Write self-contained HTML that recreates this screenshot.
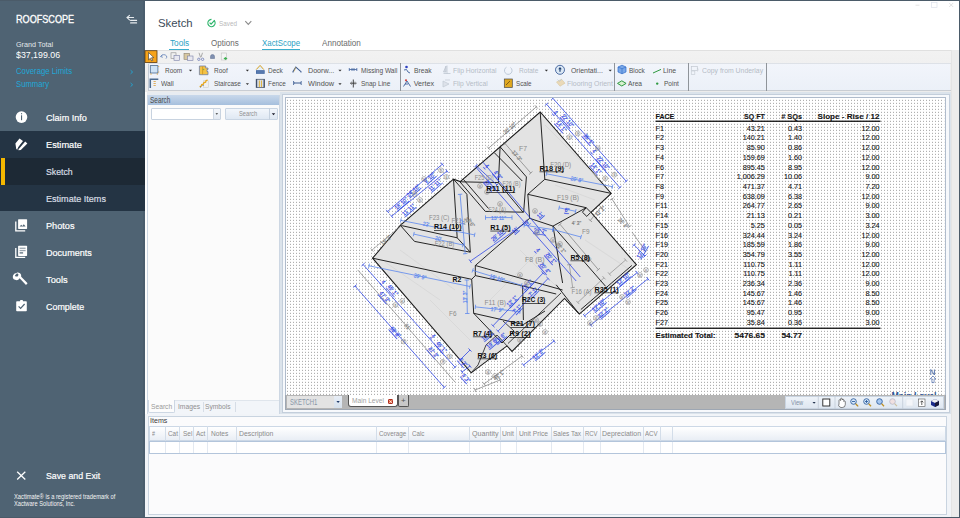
<!DOCTYPE html>
<html><head><meta charset="utf-8">
<style>
*{box-sizing:border-box;margin:0;padding:0}
html,body{width:960px;height:518px;overflow:hidden;background:#3a4855;font-family:"Liberation Sans",sans-serif;position:relative}
.a{position:absolute}
.t{position:absolute;white-space:nowrap;line-height:1;transform-origin:0 0}
svg{position:absolute;left:0;top:0}
</style></head><body>
<div class="a" style="left:0px;top:0px;width:960px;height:518px;background:#3a4855"></div>
<div class="a" style="left:0px;top:0px;width:145px;height:518px;background:#4f6373"></div>
<div class="a" style="left:143px;top:0px;width:1.8px;height:518px;background:#4a5d6d"></div>
<div class="t" style="left:16.00px;top:15.18px;font-size:10.3px;color:#ffffff;transform:scaleX(0.884);-webkit-text-stroke:0.3px #fff;">ROOFSCOPE</div>
<div class="t" style="left:16.00px;top:40.93px;font-size:8px;color:#e2e7eb;transform:scaleX(0.898);">Grand Total</div>
<div class="t" style="left:16.00px;top:51.33px;font-size:9.3px;color:#ffffff;transform:scaleX(0.946);">$37,199.06</div>
<div class="t" style="left:16.00px;top:67.12px;font-size:8.6px;color:#1fa8d8;transform:scaleX(0.902);">Coverage Limits</div>
<div class="t" style="left:16.00px;top:79.92px;font-size:8.6px;color:#1fa8d8;transform:scaleX(0.897);">Summary</div>
<div class="a" style="left:0px;top:130.5px;width:145px;height:27px;background:#243444"></div>
<div class="a" style="left:0px;top:157.5px;width:145px;height:27px;background:#1d2935"></div>
<div class="a" style="left:0px;top:184.5px;width:145px;height:26.5px;background:#243444"></div>
<div class="a" style="left:1px;top:157.5px;width:4px;height:27.5px;background:#f5b700"></div>
<div class="t" style="left:46.30px;top:112.69px;font-size:9.7px;color:#ffffff;transform:scaleX(0.937);-webkit-text-stroke:0.2px #ffffff;">Claim Info</div>
<div class="t" style="left:46.30px;top:139.79px;font-size:9.7px;color:#ffffff;transform:scaleX(0.954);-webkit-text-stroke:0.2px #ffffff;">Estimate</div>
<div class="t" style="left:46.30px;top:166.79px;font-size:9.7px;color:#d8dee4;transform:scaleX(0.900);-webkit-text-stroke:0.2px #d8dee4;">Sketch</div>
<div class="t" style="left:46.30px;top:193.79px;font-size:9.7px;color:#d8dee4;transform:scaleX(0.936);-webkit-text-stroke:0.2px #d8dee4;">Estimate Items</div>
<div class="t" style="left:46.30px;top:220.69px;font-size:9.7px;color:#ffffff;transform:scaleX(0.945);-webkit-text-stroke:0.2px #ffffff;">Photos</div>
<div class="t" style="left:46.30px;top:247.69px;font-size:9.7px;color:#ffffff;transform:scaleX(0.935);-webkit-text-stroke:0.2px #ffffff;">Documents</div>
<div class="t" style="left:46.30px;top:274.79px;font-size:9.7px;color:#ffffff;transform:scaleX(0.956);-webkit-text-stroke:0.2px #ffffff;">Tools</div>
<div class="t" style="left:46.30px;top:301.79px;font-size:9.7px;color:#ffffff;transform:scaleX(0.920);-webkit-text-stroke:0.2px #ffffff;">Complete</div>
<div class="t" style="left:46.25px;top:471.09px;font-size:9.7px;color:#ffffff;transform:scaleX(0.906);-webkit-text-stroke:0.2px #fff;">Save and Exit</div>
<div class="t" style="left:14.00px;top:493.66px;font-size:6.9px;color:#f4f4f4;transform:scaleX(0.834);">Xactimate® is a registered trademark of</div>
<div class="t" style="left:14.00px;top:501.36px;font-size:6.9px;color:#f4f4f4;transform:scaleX(0.824);">Xactware Solutions, Inc.</div>
<div class="a" style="left:145px;top:1px;width:814px;height:49px;background:#fff"></div>
<div class="t" style="left:158.30px;top:16.98px;font-size:11.6px;color:#3c4b59;transform:scaleX(0.978);">Sketch</div>
<div class="t" style="left:218.70px;top:20.23px;font-size:8px;color:#b9b9b9;transform:scaleX(0.792);">Saved</div>
<div class="t" style="left:169.50px;top:38.61px;font-size:9.2px;color:#2a9fc4;transform:scaleX(0.896);">Tools</div>
<div class="a" style="left:169px;top:48.6px;width:20px;height:1.5px;background:#3aaecd"></div>
<div class="t" style="left:211.00px;top:38.61px;font-size:9.2px;color:#6b6b6b;transform:scaleX(0.873);">Options</div>
<div class="t" style="left:261.50px;top:38.61px;font-size:9.2px;color:#2a9fc4;transform:scaleX(0.858);">XactScope</div>
<div class="a" style="left:261.5px;top:48.6px;width:38.5px;height:1.5px;background:#3aaecd"></div>
<div class="t" style="left:322.40px;top:38.61px;font-size:9.2px;color:#6b6b6b;transform:scaleX(0.885);">Annotation</div>
<div class="a" style="left:145px;top:50px;width:814px;height:42px;background:linear-gradient(#f2f2f2,#ececec)"></div>
<div class="a" style="left:145px;top:50px;width:814px;height:0.8px;background:#e0e0e0"></div>
<div class="a" style="left:147.5px;top:63px;width:802.5px;height:27.5px;background:linear-gradient(#f2f5fb,#ebf0f8)"></div>
<div class="a" style="left:147.5px;top:90.2px;width:803px;height:1px;background:#c9cdd3"></div>
<div class="a" style="left:147.5px;top:63px;width:0.9px;height:27.5px;background:#c3cbd5"></div>
<div class="a" style="left:147.5px;top:62.6px;width:803px;height:0.8px;background:#dde1e7"></div>
<div class="t" style="left:164.80px;top:66.81px;font-size:7.2px;color:#525252;transform:scaleX(0.900);">Room</div>
<div class="t" style="left:213.90px;top:66.81px;font-size:7.2px;color:#525252;transform:scaleX(0.902);">Roof</div>
<div class="t" style="left:267.50px;top:66.81px;font-size:7.2px;color:#525252;transform:scaleX(0.904);">Deck</div>
<div class="t" style="left:307.50px;top:66.81px;font-size:7.2px;color:#525252;transform:scaleX(0.992);">Doorw...</div>
<div class="t" style="left:360.60px;top:66.81px;font-size:7.2px;color:#525252;transform:scaleX(0.908);">Missing Wall</div>
<div class="t" style="left:414.40px;top:66.81px;font-size:7.2px;color:#525252;transform:scaleX(0.933);">Break</div>
<div class="t" style="left:453.30px;top:66.81px;font-size:7.2px;color:#b5bcc6;transform:scaleX(0.948);">Flip Horizontal</div>
<div class="t" style="left:519.20px;top:66.81px;font-size:7.2px;color:#b5bcc6;transform:scaleX(0.913);">Rotate</div>
<div class="t" style="left:570.50px;top:66.81px;font-size:7.2px;color:#525252;transform:scaleX(0.961);">Orientati...</div>
<div class="t" style="left:629.00px;top:66.81px;font-size:7.2px;color:#525252;transform:scaleX(0.898);">Block</div>
<div class="t" style="left:663.30px;top:66.81px;font-size:7.2px;color:#525252;transform:scaleX(0.963);">Line</div>
<div class="t" style="left:702.30px;top:66.81px;font-size:7.2px;color:#b5bcc6;transform:scaleX(0.956);">Copy from Underlay</div>
<div class="t" style="left:161.20px;top:80.11px;font-size:7.2px;color:#525252;transform:scaleX(0.931);">Wall</div>
<div class="t" style="left:213.90px;top:80.11px;font-size:7.2px;color:#525252;transform:scaleX(0.896);">Staircase</div>
<div class="t" style="left:267.50px;top:80.11px;font-size:7.2px;color:#525252;transform:scaleX(0.884);">Fence</div>
<div class="t" style="left:307.50px;top:80.11px;font-size:7.2px;color:#525252;transform:scaleX(1.022);">Window</div>
<div class="t" style="left:360.60px;top:80.11px;font-size:7.2px;color:#525252;transform:scaleX(0.907);">Snap Line</div>
<div class="t" style="left:413.70px;top:80.11px;font-size:7.2px;color:#525252;">Vertex</div>
<div class="t" style="left:453.30px;top:80.11px;font-size:7.2px;color:#b5bcc6;transform:scaleX(0.932);">Flip Vertical</div>
<div class="t" style="left:515.60px;top:80.11px;font-size:7.2px;color:#525252;transform:scaleX(0.867);">Scale</div>
<div class="t" style="left:566.60px;top:80.11px;font-size:7.2px;color:#b5bcc6;transform:scaleX(0.965);">Flooring Orient</div>
<div class="t" style="left:627.90px;top:80.11px;font-size:7.2px;color:#525252;transform:scaleX(0.924);">Area</div>
<div class="t" style="left:664.30px;top:80.11px;font-size:7.2px;color:#525252;transform:scaleX(0.908);">Point</div>
<div class="a" style="left:400.3px;top:63px;width:0.9px;height:27.5px;background:#8f949a"></div>
<div class="a" style="left:614.4px;top:63px;width:0.9px;height:27.5px;background:#8f949a"></div>
<div class="a" style="left:688.3px;top:63px;width:0.9px;height:27.5px;background:#8f949a"></div>
<div class="a" style="left:766.3px;top:63px;width:0.9px;height:27.5px;background:#8f949a"></div>
<div class="a" style="left:145px;top:91.5px;width:814px;height:426px;background:#e8ecf1"></div>
<div class="a" style="left:145px;top:91.5px;width:2.4px;height:426px;background:#fdfdfd"></div>
<div class="a" style="left:147.4px;top:94.5px;width:132.3px;height:319px;background:#fbfbfb;border:1px solid #cdd7e3"></div>
<div class="a" style="left:147.9px;top:95px;width:131.3px;height:10px;background:linear-gradient(#c9d8eb,#a6bfdd)"></div>
<div class="t" style="left:150.00px;top:95.89px;font-size:8.4px;color:#4b4b4b;transform:scaleX(0.770);">Search</div>
<div class="a" style="left:280px;top:91.5px;width:670.5px;height:324px;background:#dbe3eb"></div>
<div class="a" style="left:282.3px;top:94.2px;width:668.2px;height:319.2px;background:#f7f9fc;border:1px solid #c3cedb"></div>
<div class="a" style="left:285px;top:97px;width:660.5px;height:298.5px;background:#fff;border:1px solid #afbbcb"></div>
<svg width="960" height="518" viewBox="0 0 960 518" font-family="Liberation Sans, sans-serif"><defs><pattern id="dots" patternUnits="userSpaceOnUse" x="0" y="0" width="3" height="3"><rect x="2" y="1" width="1" height="1" fill="#b0b0b0"/><rect x="2" y="0" width="1" height="1" fill="#f0f0f0"/></pattern><clipPath id="cv"><rect x="286" y="98" width="658.5" height="297"/></clipPath></defs><g clip-path="url(#cv)"><rect x="286" y="98" width="658.5" height="297" fill="url(#dots)"/><polygon points="372.6,258.2 400.3,225.3 453.5,179.2 460.2,181.6 540.2,112 611.2,193.4 591,212.4 636.4,264.7 579.3,314.1 564.5,298.5 512,351.4 507,345.9 471.2,372.8" fill="#e3e3e3" stroke="#1a1a1a" stroke-width="1.05" stroke-linejoin="miter"/>
<path d="M586.2 207.7 L582.4 212.2 L586.8 216.4 L590.8 212.3 Z" fill="#e3e3e3" stroke="#1a1a1a" stroke-width="0.95" stroke-linejoin="round"/>
<line x1="400" y1="250" x2="455" y2="290" stroke="#d2d2d2" stroke-width="0.6"/>
<line x1="430" y1="300" x2="470" y2="340" stroke="#d2d2d2" stroke-width="0.6"/>
<line x1="545" y1="125" x2="600" y2="180" stroke="#d2d2d2" stroke-width="0.6"/>
<line x1="490" y1="300" x2="540" y2="250" stroke="#d2d2d2" stroke-width="0.6"/>
<line x1="520" y1="250" x2="560" y2="290" stroke="#d2d2d2" stroke-width="0.6"/>
<line x1="385" y1="262" x2="440" y2="300" stroke="#d2d2d2" stroke-width="0.6"/>
<line x1="585" y1="240" x2="630" y2="270" stroke="#d2d2d2" stroke-width="0.6"/>
<line x1="555" y1="185" x2="595" y2="200" stroke="#d2d2d2" stroke-width="0.6"/>
<line x1="540.2" y1="112" x2="544.8" y2="179.3" stroke="#1a1a1a" stroke-width="0.95"/>
<line x1="544.8" y1="179.3" x2="611.2" y2="193.4" stroke="#1a1a1a" stroke-width="0.95"/>
<line x1="526.4" y1="176.9" x2="523.6" y2="212.6" stroke="#1a1a1a" stroke-width="0.95"/>
<line x1="544.8" y1="179.3" x2="527.8" y2="194.3" stroke="#1a1a1a" stroke-width="0.95"/>
<line x1="527.8" y1="194.3" x2="529.6" y2="218.3" stroke="#1a1a1a" stroke-width="0.95"/>
<line x1="500.1" y1="146.8" x2="526.4" y2="176.9" stroke="#1a1a1a" stroke-width="0.95"/>
<line x1="500.1" y1="146.8" x2="498.4" y2="182.6" stroke="#1a1a1a" stroke-width="0.95"/>
<line x1="459.9" y1="181.8" x2="498.4" y2="182.6" stroke="#1a1a1a" stroke-width="0.95"/>
<line x1="494.3" y1="152.7" x2="522.3" y2="181" stroke="#1a1a1a" stroke-width="0.95"/>
<line x1="459.9" y1="181.8" x2="485.3" y2="211.4" stroke="#1a1a1a" stroke-width="0.95"/>
<line x1="485.3" y1="211.4" x2="523" y2="212.2" stroke="#1a1a1a" stroke-width="0.95"/>
<line x1="498.4" y1="182.6" x2="523" y2="212.2" stroke="#1a1a1a" stroke-width="0.95"/>
<line x1="463.5" y1="179.5" x2="488.5" y2="208.5" stroke="#1a1a1a" stroke-width="0.95"/>
<line x1="527.8" y1="194.3" x2="586.2" y2="207.7" stroke="#1a1a1a" stroke-width="0.95"/>
<line x1="529.6" y1="218.3" x2="553" y2="226.1" stroke="#1a1a1a" stroke-width="0.95"/>
<line x1="553" y1="226.1" x2="586.2" y2="207.7" stroke="#1a1a1a" stroke-width="0.95"/>
<line x1="553" y1="226.1" x2="605.6" y2="286.3" stroke="#1a1a1a" stroke-width="0.95"/>
<line x1="553" y1="226.1" x2="562.6" y2="283" stroke="#1a1a1a" stroke-width="0.95"/>
<line x1="631.8" y1="265.5" x2="580.9" y2="309.5" stroke="#1a1a1a" stroke-width="0.95"/>
<line x1="556.2" y1="284.8" x2="579.3" y2="314.1" stroke="#1a1a1a" stroke-width="0.95"/>
<line x1="453.5" y1="179.2" x2="457.2" y2="237.8" stroke="#1a1a1a" stroke-width="0.95"/>
<line x1="453.5" y1="179.2" x2="466.9" y2="194.3" stroke="#1a1a1a" stroke-width="0.95"/>
<line x1="466.9" y1="194.3" x2="470.3" y2="252.2" stroke="#1a1a1a" stroke-width="0.95"/>
<line x1="400.3" y1="225.3" x2="414.5" y2="241.4" stroke="#1a1a1a" stroke-width="0.95"/>
<line x1="414.5" y1="241.4" x2="470.3" y2="252.2" stroke="#1a1a1a" stroke-width="0.95"/>
<line x1="400.3" y1="225.3" x2="457.2" y2="237.8" stroke="#1a1a1a" stroke-width="0.95"/>
<line x1="457.2" y1="237.8" x2="470.3" y2="252.2" stroke="#1a1a1a" stroke-width="0.95"/>
<line x1="372.6" y1="258.2" x2="471.7" y2="279.3" stroke="#1a1a1a" stroke-width="0.95"/>
<line x1="529.6" y1="218.3" x2="475.3" y2="265.5" stroke="#1a1a1a" stroke-width="0.95"/>
<line x1="475.3" y1="265.5" x2="475.3" y2="275.6" stroke="#1a1a1a" stroke-width="0.95"/>
<line x1="471.7" y1="279.3" x2="475.3" y2="275.6" stroke="#1a1a1a" stroke-width="0.95"/>
<line x1="475.3" y1="265.5" x2="562.6" y2="290" stroke="#1a1a1a" stroke-width="0.95"/>
<line x1="475.3" y1="275.6" x2="522.3" y2="285.8" stroke="#1a1a1a" stroke-width="0.95"/>
<line x1="522.3" y1="285.8" x2="556.2" y2="294" stroke="#1a1a1a" stroke-width="0.95"/>
<line x1="471.7" y1="279.3" x2="473.7" y2="313.3" stroke="#1a1a1a" stroke-width="0.95"/>
<line x1="473.7" y1="313.3" x2="502" y2="343" stroke="#1a1a1a" stroke-width="0.95"/>
<line x1="502" y1="343" x2="514" y2="331" stroke="#1a1a1a" stroke-width="0.95"/>
<line x1="473.7" y1="313.3" x2="523.4" y2="324.5" stroke="#1a1a1a" stroke-width="0.95"/>
<line x1="522.6" y1="286" x2="523.4" y2="320" stroke="#1a1a1a" stroke-width="0.95"/>
<line x1="523.4" y1="324.5" x2="545" y2="311" stroke="#1a1a1a" stroke-width="0.95"/>
<line x1="561" y1="293" x2="508" y2="343.5" stroke="#1a1a1a" stroke-width="0.8"/>
<line x1="507" y1="345.9" x2="497" y2="335" stroke="#1a1a1a" stroke-width="0.8"/>
<line x1="497" y1="335" x2="486" y2="345" stroke="#1a1a1a" stroke-width="0.8"/>
<line x1="514" y1="331" x2="503" y2="321" stroke="#1a1a1a" stroke-width="0.8"/>
<line x1="486" y1="345" x2="478" y2="365" stroke="#1a1a1a" stroke-width="0.8"/>
<line x1="471.2" y1="372.8" x2="478" y2="365" stroke="#1a1a1a" stroke-width="0.8"/>
<line x1="552.9" y1="98.3" x2="626.2" y2="181.2" stroke="#2f46e6" stroke-width="0.8"/>
<line x1="554.55" y1="96.84" x2="551.25" y2="99.76" stroke="#2f46e6" stroke-width="0.8"/>
<line x1="627.85" y1="179.74" x2="624.55" y2="182.66" stroke="#2f46e6" stroke-width="0.8"/>
<line x1="546.5" y1="104.2" x2="619.8" y2="187.6" stroke="#2f46e6" stroke-width="0.8"/>
<line x1="548.15" y1="102.75" x2="544.85" y2="105.65" stroke="#2f46e6" stroke-width="0.8"/>
<line x1="621.45" y1="186.15" x2="618.15" y2="189.05" stroke="#2f46e6" stroke-width="0.8"/>
<line x1="387.6" y1="211.5" x2="442.3" y2="164.2" stroke="#2f46e6" stroke-width="0.8"/>
<line x1="386.16" y1="209.84" x2="389.04" y2="213.16" stroke="#2f46e6" stroke-width="0.8"/>
<line x1="440.86" y1="162.54" x2="443.74" y2="165.86" stroke="#2f46e6" stroke-width="0.8"/>
<line x1="391.6" y1="216.2" x2="447" y2="171" stroke="#2f46e6" stroke-width="0.8"/>
<line x1="390.21" y1="214.5" x2="392.99" y2="217.9" stroke="#2f46e6" stroke-width="0.8"/>
<line x1="445.61" y1="169.3" x2="448.39" y2="172.7" stroke="#2f46e6" stroke-width="0.8"/>
<line x1="363.1" y1="264.5" x2="455" y2="367.2" stroke="#2f46e6" stroke-width="0.8"/>
<line x1="364.74" y1="263.03" x2="361.46" y2="265.97" stroke="#2f46e6" stroke-width="0.8"/>
<line x1="456.64" y1="365.73" x2="453.36" y2="368.67" stroke="#2f46e6" stroke-width="0.8"/>
<line x1="355" y1="286" x2="444.2" y2="387.4" stroke="#2f46e6" stroke-width="0.8"/>
<line x1="356.65" y1="284.55" x2="353.35" y2="287.45" stroke="#2f46e6" stroke-width="0.8"/>
<line x1="445.85" y1="385.95" x2="442.55" y2="388.85" stroke="#2f46e6" stroke-width="0.8"/>
<line x1="357.7" y1="269.9" x2="455" y2="382" stroke="#7c7c7c" stroke-width="0.7"/>
<line x1="470.3" y1="261.2" x2="524" y2="224" stroke="#2f46e6" stroke-width="0.8"/>
<line x1="469.05" y1="259.39" x2="471.55" y2="263.01" stroke="#2f46e6" stroke-width="0.8"/>
<line x1="522.75" y1="222.19" x2="525.25" y2="225.81" stroke="#2f46e6" stroke-width="0.8"/>
<line x1="476" y1="165.6" x2="497" y2="185" stroke="#2f46e6" stroke-width="0.8"/>
<line x1="477.49" y1="163.98" x2="474.51" y2="167.22" stroke="#2f46e6" stroke-width="0.8"/>
<line x1="498.49" y1="183.38" x2="495.51" y2="186.62" stroke="#2f46e6" stroke-width="0.8"/>
<line x1="476.2" y1="167.6" x2="576.2" y2="281" stroke="#2f46e6" stroke-width="0.8"/>
<line x1="483" y1="162.2" x2="580.3" y2="277" stroke="#2f46e6" stroke-width="0.8"/>
<line x1="553" y1="229.5" x2="581" y2="237" stroke="#5b86ee" stroke-width="0.8"/>
<line x1="553.57" y1="227.37" x2="552.43" y2="231.63" stroke="#5b86ee" stroke-width="0.8"/>
<line x1="581.57" y1="234.87" x2="580.43" y2="239.13" stroke="#5b86ee" stroke-width="0.8"/>
<line x1="569.3" y1="264.6" x2="572.7" y2="287.6" stroke="#7c7c7c" stroke-width="0.6"/>
<line x1="571.48" y1="264.28" x2="567.12" y2="264.92" stroke="#7c7c7c" stroke-width="0.6"/>
<line x1="574.88" y1="287.28" x2="570.52" y2="287.92" stroke="#7c7c7c" stroke-width="0.6"/>
<line x1="485.5" y1="217.6" x2="512" y2="217.6" stroke="#5b86ee" stroke-width="0.8"/>
<line x1="485.5" y1="215.4" x2="485.5" y2="219.8" stroke="#5b86ee" stroke-width="0.8"/>
<line x1="512.0" y1="215.4" x2="512.0" y2="219.8" stroke="#5b86ee" stroke-width="0.8"/>
<line x1="546.5" y1="173.8" x2="612.5" y2="186.7" stroke="#5b86ee" stroke-width="0.8"/>
<line x1="546.92" y1="171.64" x2="546.08" y2="175.96" stroke="#5b86ee" stroke-width="0.8"/>
<line x1="612.92" y1="184.54" x2="612.08" y2="188.86" stroke="#5b86ee" stroke-width="0.8"/>
<line x1="369" y1="265.8" x2="470" y2="286.5" stroke="#5b86ee" stroke-width="0.8"/>
<line x1="369.44" y1="263.64" x2="368.56" y2="267.96" stroke="#5b86ee" stroke-width="0.8"/>
<line x1="470.44" y1="284.34" x2="469.56" y2="288.66" stroke="#5b86ee" stroke-width="0.8"/>
<line x1="472.7" y1="270.4" x2="521.4" y2="285.3" stroke="#5b86ee" stroke-width="0.8"/>
<line x1="473.34" y1="268.3" x2="472.06" y2="272.5" stroke="#5b86ee" stroke-width="0.8"/>
<line x1="522.04" y1="283.2" x2="520.76" y2="287.4" stroke="#5b86ee" stroke-width="0.8"/>
<line x1="400.8" y1="220.4" x2="474.6" y2="234.9" stroke="#5b86ee" stroke-width="0.8"/>
<line x1="401.22" y1="218.24" x2="400.38" y2="222.56" stroke="#5b86ee" stroke-width="0.8"/>
<line x1="475.02" y1="232.74" x2="474.18" y2="237.06" stroke="#5b86ee" stroke-width="0.8"/>
<line x1="413.8" y1="234.1" x2="463" y2="245" stroke="#5b86ee" stroke-width="0.8"/>
<line x1="414.28" y1="231.95" x2="413.32" y2="236.25" stroke="#5b86ee" stroke-width="0.8"/>
<line x1="463.48" y1="242.85" x2="462.52" y2="247.15" stroke="#5b86ee" stroke-width="0.8"/>
<line x1="460.1" y1="194.3" x2="465.2" y2="253.7" stroke="#5b86ee" stroke-width="0.8"/>
<line x1="462.29" y1="194.11" x2="457.91" y2="194.49" stroke="#5b86ee" stroke-width="0.8"/>
<line x1="467.39" y1="253.51" x2="463.01" y2="253.89" stroke="#5b86ee" stroke-width="0.8"/>
<line x1="524.3" y1="225.2" x2="553" y2="229.6" stroke="#5b86ee" stroke-width="0.8"/>
<line x1="524.63" y1="223.03" x2="523.97" y2="227.37" stroke="#5b86ee" stroke-width="0.8"/>
<line x1="553.33" y1="227.43" x2="552.67" y2="231.77" stroke="#5b86ee" stroke-width="0.8"/>
<line x1="559.1" y1="207.8" x2="575.6" y2="211.3" stroke="#5b86ee" stroke-width="0.8"/>
<line x1="559.56" y1="205.65" x2="558.64" y2="209.95" stroke="#5b86ee" stroke-width="0.8"/>
<line x1="576.06" y1="209.15" x2="575.14" y2="213.45" stroke="#5b86ee" stroke-width="0.8"/>
<line x1="475.4" y1="306.9" x2="520" y2="311.6" stroke="#5b86ee" stroke-width="0.8"/>
<line x1="475.63" y1="304.71" x2="475.17" y2="309.09" stroke="#5b86ee" stroke-width="0.8"/>
<line x1="520.23" y1="309.41" x2="519.77" y2="313.79" stroke="#5b86ee" stroke-width="0.8"/>
<line x1="584.6" y1="315.8" x2="637.1" y2="272.6" stroke="#2f46e6" stroke-width="0.8"/>
<line x1="583.2" y1="314.1" x2="586.0" y2="317.5" stroke="#2f46e6" stroke-width="0.8"/>
<line x1="635.7" y1="270.9" x2="638.5" y2="274.3" stroke="#2f46e6" stroke-width="0.8"/>
<line x1="590.8" y1="325" x2="647.9" y2="278.8" stroke="#2f46e6" stroke-width="0.8"/>
<line x1="589.42" y1="323.29" x2="592.18" y2="326.71" stroke="#2f46e6" stroke-width="0.8"/>
<line x1="646.52" y1="277.09" x2="649.28" y2="280.51" stroke="#2f46e6" stroke-width="0.8"/>
<line x1="634" y1="244.8" x2="645" y2="256" stroke="#2f46e6" stroke-width="0.8"/>
<line x1="635.57" y1="243.26" x2="632.43" y2="246.34" stroke="#2f46e6" stroke-width="0.8"/>
<line x1="646.57" y1="254.46" x2="643.43" y2="257.54" stroke="#2f46e6" stroke-width="0.8"/>
<line x1="523.5" y1="365" x2="554" y2="341" stroke="#2f46e6" stroke-width="0.8"/>
<line x1="522.14" y1="363.27" x2="524.86" y2="366.73" stroke="#2f46e6" stroke-width="0.8"/>
<line x1="552.64" y1="339.27" x2="555.36" y2="342.73" stroke="#2f46e6" stroke-width="0.8"/>
<line x1="493" y1="325.8" x2="543" y2="273.1" stroke="#2f46e6" stroke-width="0.8"/>
<line x1="491.4" y1="324.29" x2="494.6" y2="327.31" stroke="#2f46e6" stroke-width="0.8"/>
<line x1="541.4" y1="271.59" x2="544.6" y2="274.61" stroke="#2f46e6" stroke-width="0.8"/>
<line x1="498" y1="331.2" x2="548" y2="278.5" stroke="#2f46e6" stroke-width="0.8"/>
<line x1="496.4" y1="329.69" x2="499.6" y2="332.71" stroke="#2f46e6" stroke-width="0.8"/>
<line x1="546.4" y1="276.99" x2="549.6" y2="280.01" stroke="#2f46e6" stroke-width="0.8"/>
<line x1="466.8" y1="280" x2="467.3" y2="313.5" stroke="#5b86ee" stroke-width="0.8"/>
<line x1="469.0" y1="279.97" x2="464.6" y2="280.03" stroke="#5b86ee" stroke-width="0.8"/>
<line x1="469.5" y1="313.47" x2="465.1" y2="313.53" stroke="#5b86ee" stroke-width="0.8"/>
<line x1="460" y1="360" x2="470" y2="350" stroke="#2f46e6" stroke-width="0.8"/>
<line x1="458.44" y1="358.44" x2="461.56" y2="361.56" stroke="#2f46e6" stroke-width="0.8"/>
<line x1="468.44" y1="348.44" x2="471.56" y2="351.56" stroke="#2f46e6" stroke-width="0.8"/>
<line x1="462" y1="372" x2="470" y2="366" stroke="#2f46e6" stroke-width="0.8"/>
<line x1="460.68" y1="370.24" x2="463.32" y2="373.76" stroke="#2f46e6" stroke-width="0.8"/>
<line x1="468.68" y1="364.24" x2="471.32" y2="367.76" stroke="#2f46e6" stroke-width="0.8"/>
<line x1="609.4" y1="274" x2="625.6" y2="260" stroke="#7c7c7c" stroke-width="0.6"/>
<line x1="607.96" y1="272.34" x2="610.84" y2="275.66" stroke="#7c7c7c" stroke-width="0.6"/>
<line x1="624.16" y1="258.34" x2="627.04" y2="261.66" stroke="#7c7c7c" stroke-width="0.6"/>
<line x1="577.8" y1="302.5" x2="604" y2="277.8" stroke="#7c7c7c" stroke-width="0.6"/>
<line x1="576.29" y1="300.9" x2="579.31" y2="304.1" stroke="#7c7c7c" stroke-width="0.6"/>
<line x1="602.49" y1="276.2" x2="605.51" y2="279.4" stroke="#7c7c7c" stroke-width="0.6"/>
<line x1="488.6" y1="148.2" x2="536.3" y2="106.9" stroke="#7c7c7c" stroke-width="0.7"/>
<line x1="487.16" y1="146.54" x2="490.04" y2="149.86" stroke="#7c7c7c" stroke-width="0.7"/>
<line x1="534.86" y1="105.24" x2="537.74" y2="108.56" stroke="#7c7c7c" stroke-width="0.7"/>
<line x1="505.1" y1="143.6" x2="530.8" y2="173" stroke="#7c7c7c" stroke-width="0.7"/>
<line x1="506.76" y1="142.15" x2="503.44" y2="145.05" stroke="#7c7c7c" stroke-width="0.7"/>
<line x1="532.46" y1="171.55" x2="529.14" y2="174.45" stroke="#7c7c7c" stroke-width="0.7"/>
<line x1="611.9" y1="198.9" x2="629.5" y2="226.6" stroke="#7c7c7c" stroke-width="0.7"/>
<line x1="613.76" y1="197.72" x2="610.04" y2="200.08" stroke="#7c7c7c" stroke-width="0.7"/>
<line x1="631.36" y1="225.42" x2="627.64" y2="227.78" stroke="#7c7c7c" stroke-width="0.7"/>
<line x1="632" y1="232" x2="646" y2="252" stroke="#7c7c7c" stroke-width="0.7"/>
<line x1="484" y1="384" x2="522" y2="356" stroke="#7c7c7c" stroke-width="0.7"/>
<line x1="482.69" y1="382.23" x2="485.31" y2="385.77" stroke="#7c7c7c" stroke-width="0.7"/>
<line x1="520.69" y1="354.23" x2="523.31" y2="357.77" stroke="#7c7c7c" stroke-width="0.7"/>
<line x1="560" y1="224.3" x2="598.3" y2="269.6" stroke="#7c7c7c" stroke-width="0.7"/>
<line x1="561.68" y1="222.88" x2="558.32" y2="225.72" stroke="#7c7c7c" stroke-width="0.7"/>
<line x1="599.98" y1="268.18" x2="596.62" y2="271.02" stroke="#7c7c7c" stroke-width="0.7"/>
<line x1="475" y1="390" x2="500" y2="380" stroke="#7c7c7c" stroke-width="0.7"/>
<line x1="474.18" y1="387.96" x2="475.82" y2="392.04" stroke="#7c7c7c" stroke-width="0.7"/>
<line x1="499.18" y1="377.96" x2="500.82" y2="382.04" stroke="#7c7c7c" stroke-width="0.7"/>
<line x1="590.3" y1="220.5" x2="601" y2="207" stroke="#7c7c7c" stroke-width="0.7"/>
<line x1="588.58" y1="219.13" x2="592.02" y2="221.87" stroke="#7c7c7c" stroke-width="0.7"/>
<line x1="599.28" y1="205.63" x2="602.72" y2="208.37" stroke="#7c7c7c" stroke-width="0.7"/>
<line x1="372" y1="250" x2="402" y2="225" stroke="#7c7c7c" stroke-width="0.6"/>
<line x1="370.59" y1="248.31" x2="373.41" y2="251.69" stroke="#7c7c7c" stroke-width="0.6"/>
<line x1="400.59" y1="223.31" x2="403.41" y2="226.69" stroke="#7c7c7c" stroke-width="0.6"/>
<text x="0" y="0" dy="2.1" font-size="5.9" fill="#2f46e6" stroke="#2f46e6" stroke-width="0.18" text-anchor="middle" text-decoration="underline" transform="translate(401.1 203.4) rotate(-41) scale(0.86 1)">18' 10"</text>
<text x="0" y="0" dy="2.1" font-size="5.9" fill="#2f46e6" stroke="#2f46e6" stroke-width="0.18" text-anchor="middle" text-decoration="underline" transform="translate(413.2 190.5) rotate(-41) scale(0.86 1)">24' 10"</text>
<text x="0" y="0" dy="2.1" font-size="5.9" fill="#2f46e6" stroke="#2f46e6" stroke-width="0.18" text-anchor="middle" text-decoration="underline" transform="translate(429.5 177.7) rotate(-41) scale(0.86 1)">9' 10"</text>
<text x="0" y="0" dy="2.1" font-size="5.9" fill="#2f46e6" stroke="#2f46e6" stroke-width="0.18" text-anchor="middle" text-decoration="underline" transform="translate(408.5 209.5) rotate(-41) scale(0.86 1)">11' 11"</text>
<text x="0" y="0" dy="2.1" font-size="5.9" fill="#2f46e6" stroke="#2f46e6" stroke-width="0.18" text-anchor="middle" text-decoration="underline" transform="translate(434.9 185.1) rotate(-41) scale(0.86 1)">11' 11"</text>
<text x="0" y="0" dy="2.1" font-size="5.9" fill="#2f46e6" stroke="#2f46e6" stroke-width="0.18" text-anchor="middle" text-decoration="underline" transform="translate(555.7 112.4) rotate(48.5) scale(0.86 1)">4</text>
<text x="0" y="0" dy="2.1" font-size="5.9" fill="#2f46e6" stroke="#2f46e6" stroke-width="0.18" text-anchor="middle" text-decoration="underline" transform="translate(567.6 120.7) rotate(48.5) scale(0.86 1)">22' 10"</text>
<text x="0" y="0" dy="2.1" font-size="5.9" fill="#2f46e6" stroke="#2f46e6" stroke-width="0.18" text-anchor="middle" text-decoration="underline" transform="translate(561.2 126.2) rotate(48.5) scale(0.86 1)">14' 1"</text>
<text x="0" y="0" dy="2.1" font-size="5.9" fill="#2f46e6" stroke="#2f46e6" stroke-width="0.18" text-anchor="middle" text-decoration="underline" transform="translate(588.7 139) rotate(48.5) scale(0.86 1)">36' 1"</text>
<text x="0" y="0" dy="2.1" font-size="5.9" fill="#2f46e6" stroke="#2f46e6" stroke-width="0.18" text-anchor="middle" text-decoration="underline" transform="translate(603.3 162.8) rotate(48.5) scale(0.86 1)">22' 10"</text>
<text x="0" y="0" dy="2.1" font-size="5.9" fill="#2f46e6" stroke="#2f46e6" stroke-width="0.18" text-anchor="middle" text-decoration="underline" transform="translate(596 168.3) rotate(48.5) scale(0.86 1)">14' 1"</text>
<text x="0" y="0" dy="2.1" font-size="5.9" fill="#2f46e6" stroke="#2f46e6" stroke-width="0.18" text-anchor="middle" text-decoration="underline" transform="translate(594.2 150.9) rotate(48.5) scale(0.86 1)">4</text>
<text x="0" y="0" dy="2.1" font-size="5.9" fill="#2f46e6" stroke="#2f46e6" stroke-width="0.18" text-anchor="middle" text-decoration="underline" transform="translate(383.4 282) rotate(48.5) scale(0.86 1)">4</text>
<text x="0" y="0" dy="2.1" font-size="5.9" fill="#2f46e6" stroke="#2f46e6" stroke-width="0.18" text-anchor="middle" text-decoration="underline" transform="translate(392.8 290.1) rotate(48.5) scale(0.86 1)">46' 1"</text>
<text x="0" y="0" dy="2.1" font-size="5.9" fill="#2f46e6" stroke="#2f46e6" stroke-width="0.18" text-anchor="middle" text-decoration="underline" transform="translate(384.7 296.9) rotate(48.5) scale(0.86 1)">47' 3"</text>
<text x="0" y="0" dy="2.1" font-size="5.9" fill="#2f46e6" stroke="#2f46e6" stroke-width="0.18" text-anchor="middle" text-decoration="underline" transform="translate(395.5 332) rotate(48.5) scale(0.86 1)">68' 8"</text>
<text x="0" y="0" dy="2.1" font-size="5.9" fill="#2f46e6" stroke="#2f46e6" stroke-width="0.18" text-anchor="middle" text-decoration="underline" transform="translate(433.4 336) rotate(48.5) scale(0.86 1)">4</text>
<text x="0" y="0" dy="2.1" font-size="5.9" fill="#2f46e6" stroke="#2f46e6" stroke-width="0.18" text-anchor="middle" text-decoration="underline" transform="translate(441.5 346.9) rotate(48.5) scale(0.86 1)">46' 1"</text>
<text x="0" y="0" dy="2.1" font-size="5.9" fill="#2f46e6" stroke="#2f46e6" stroke-width="0.18" text-anchor="middle" text-decoration="underline" transform="translate(433.4 352.3) rotate(48.5) scale(0.86 1)">47' 3"</text>
<text x="0" y="0" dy="2.1" font-size="5.9" fill="#2f46e6" stroke="#2f46e6" stroke-width="0.18" text-anchor="middle" text-decoration="underline" transform="translate(497.7 234.9) rotate(-41) scale(0.86 1)">28' 10"</text>
<text x="0" y="0" dy="2.1" font-size="5.9" fill="#2f46e6" stroke="#2f46e6" stroke-width="0.18" text-anchor="middle" text-decoration="underline" transform="translate(515 230) rotate(-41) scale(0.86 1)">11'</text>
<text x="0" y="0" dy="2.1" font-size="5.9" fill="#2f46e6" stroke="#2f46e6" stroke-width="0.18" text-anchor="middle" text-decoration="underline" transform="translate(527 222) rotate(-41) scale(0.86 1)">9'</text>
<text x="0" y="0" dy="2.1" font-size="5.9" fill="#2f46e6" stroke="#2f46e6" stroke-width="0.18" text-anchor="middle" text-decoration="underline" transform="translate(540 215) rotate(-41) scale(0.86 1)">11'</text>
<text x="0" y="0" dy="2.1" font-size="5.9" fill="#2f46e6" stroke="#2f46e6" stroke-width="0.18" text-anchor="middle" text-decoration="underline" transform="translate(551 258) rotate(48.5) scale(0.86 1)">20' 1"</text>
<text x="0" y="0" dy="2.1" font-size="5.9" fill="#2f46e6" stroke="#2f46e6" stroke-width="0.18" text-anchor="middle" text-decoration="underline" transform="translate(545 268) rotate(48.5) scale(0.86 1)">20' 4"</text>
<text x="0" y="0" dy="2.1" font-size="5.9" fill="#2f46e6" stroke="#2f46e6" stroke-width="0.18" text-anchor="middle" text-decoration="underline" transform="translate(538 250) rotate(48.5) scale(0.86 1)">4</text>
<text x="0" y="0" dy="2.1" font-size="5.9" fill="#2f46e6" stroke="#2f46e6" stroke-width="0.18" text-anchor="middle" text-decoration="underline" transform="translate(498 175) rotate(48.5) scale(0.86 1)">4' 9"</text>
<text x="0" y="0" dy="2.1" font-size="5.9" fill="#2f46e6" stroke="#2f46e6" stroke-width="0.18" text-anchor="middle" text-decoration="underline" transform="translate(490 185) rotate(48.5) scale(0.86 1)">25' 4"</text>
<text x="0" y="0" dy="2.1" font-size="5.9" fill="#2f46e6" stroke="#2f46e6" stroke-width="0.18" text-anchor="middle" text-decoration="underline" transform="translate(487 166) rotate(48.5) scale(0.86 1)">4</text>
<text x="0" y="0" dy="2.1" font-size="5.9" fill="#2f46e6" stroke="#2f46e6" stroke-width="0.18" text-anchor="middle" text-decoration="underline" transform="translate(598.5 305) rotate(-41) scale(0.86 1)">12' 10"</text>
<text x="0" y="0" dy="2.1" font-size="5.9" fill="#2f46e6" stroke="#2f46e6" stroke-width="0.18" text-anchor="middle" text-decoration="underline" transform="translate(623.2 278.8) rotate(-41) scale(0.86 1)">12' 10"</text>
<text x="0" y="0" dy="2.1" font-size="5.9" fill="#2f46e6" stroke="#2f46e6" stroke-width="0.18" text-anchor="middle" text-decoration="underline" transform="translate(603.1 312.7) rotate(-41) scale(0.86 1)">32' 2"</text>
<text x="0" y="0" dy="2.1" font-size="5.9" fill="#2f46e6" stroke="#2f46e6" stroke-width="0.18" text-anchor="middle" text-decoration="underline" transform="translate(629.4 291.1) rotate(-41) scale(0.86 1)">32' 2"</text>
<text x="0" y="0" dy="2.1" font-size="5.9" fill="#2f46e6" stroke="#2f46e6" stroke-width="0.18" text-anchor="middle" text-decoration="underline" transform="translate(641.7 251) rotate(-60) scale(0.86 1)">12' 10"</text>
<text x="0" y="0" dy="2.1" font-size="5.9" fill="#2f46e6" stroke="#2f46e6" stroke-width="0.18" text-anchor="middle" text-decoration="underline" transform="translate(538 354) rotate(-41) scale(0.86 1)">12' 2"</text>
<text x="0" y="0" dy="2.1" font-size="5.9" fill="#2f46e6" stroke="#2f46e6" stroke-width="0.18" text-anchor="middle" text-decoration="underline" transform="translate(487 335) rotate(-41) scale(0.86 1)">19' 2"</text>
<text x="0" y="0" dy="2.1" font-size="5.9" fill="#2f46e6" stroke="#2f46e6" stroke-width="0.18" text-anchor="middle" text-decoration="underline" transform="translate(492 343) rotate(-41) scale(0.86 1)">19' 6"</text>
<text x="0" y="0" dy="2.1" font-size="5.9" fill="#2f46e6" stroke="#2f46e6" stroke-width="0.18" text-anchor="middle" text-decoration="underline" transform="translate(500 338) rotate(-41) scale(0.86 1)">23' 6"</text>
<text x="0" y="0" dy="2.1" font-size="5.9" fill="#2f46e6" stroke="#2f46e6" stroke-width="0.18" text-anchor="middle" text-decoration="underline" transform="translate(512 301) rotate(-46) scale(0.86 1)">12' 1"</text>
<text x="0" y="0" dy="2.1" font-size="5.9" fill="#2f46e6" stroke="#2f46e6" stroke-width="0.18" text-anchor="middle" text-decoration="underline" transform="translate(527 285) rotate(-46) scale(0.86 1)">12' 1"</text>
<text x="0" y="0" dy="2.1" font-size="5.9" fill="#2f46e6" stroke="#2f46e6" stroke-width="0.18" text-anchor="middle" text-decoration="underline" transform="translate(517 309) rotate(-46) scale(0.86 1)">7' 1"</text>
<text x="0" y="0" dy="2.1" font-size="5.9" fill="#2f46e6" stroke="#2f46e6" stroke-width="0.18" text-anchor="middle" text-decoration="underline" transform="translate(533 292) rotate(-46) scale(0.86 1)">7' 1"</text>
<text x="0" y="0" dy="2.1" font-size="5.9" fill="#2f46e6" stroke="#2f46e6" stroke-width="0.18" text-anchor="middle" text-decoration="underline" transform="translate(463 362) rotate(48.5) scale(0.86 1)">4' 3"</text>
<text x="0" y="0" dy="2.1" font-size="5.9" fill="#2f46e6" stroke="#2f46e6" stroke-width="0.18" text-anchor="middle" text-decoration="underline" transform="translate(466 378) rotate(48.5) scale(0.86 1)">4' 3"</text>
<text x="0" y="0" dy="2.1" font-size="5.9" fill="#2f46e6" stroke="#2f46e6" stroke-width="0.18" text-anchor="middle" text-decoration="underline" transform="translate(540 231) rotate(8) scale(0.86 1)">23' 7"</text>
<text x="0" y="0" dy="2.1" font-size="5.9" fill="#2f46e6" stroke="#2f46e6" stroke-width="0.18" text-anchor="middle" text-decoration="underline" transform="translate(567 210) rotate(8) scale(0.86 1)">6"</text>
<text x="0" y="0" dy="2.1" font-size="5.8" fill="#5b86ee" stroke="#5b86ee" stroke-width="0.18" text-anchor="middle" transform="translate(426 224) rotate(11) scale(0.86 1)">23'</text>
<text x="0" y="0" dy="2.1" font-size="5.8" fill="#5b86ee" stroke="#5b86ee" stroke-width="0.18" text-anchor="middle" transform="translate(438.4 238.5) rotate(11) scale(0.86 1)">20'</text>
<text x="0" y="0" dy="2.1" font-size="5.8" fill="#5b86ee" stroke="#5b86ee" stroke-width="0.18" text-anchor="middle" transform="translate(498.5 218) rotate(0) scale(0.86 1)">13' 11"</text>
<text x="0" y="0" dy="2.1" font-size="5.8" fill="#5b86ee" stroke="#5b86ee" stroke-width="0.18" text-anchor="middle" transform="translate(576.7 179.3) rotate(11) scale(0.86 1)">20' 8"</text>
<text x="0" y="0" dy="2.1" font-size="5.8" fill="#5b86ee" stroke="#5b86ee" stroke-width="0.18" text-anchor="middle" transform="translate(420 276.5) rotate(12) scale(0.86 1)">39' 9"</text>
<text x="0" y="0" dy="2.1" font-size="5.8" fill="#5b86ee" stroke="#5b86ee" stroke-width="0.18" text-anchor="middle" transform="translate(497 278) rotate(17) scale(0.86 1)">19' 10"</text>
<text x="0" y="0" dy="2.1" font-size="5.8" fill="#5b86ee" stroke="#5b86ee" stroke-width="0.18" text-anchor="middle" transform="translate(497 309.5) rotate(6) scale(0.86 1)">17' 9"</text>
<text x="0" y="0" dy="2.1" font-size="5.8" fill="#5b86ee" stroke="#5b86ee" stroke-width="0.18" text-anchor="middle" transform="translate(464.6 297) rotate(-90) scale(0.86 1)">13' 3"</text>
<text x="0" y="0" dy="2.1" font-size="5.8" fill="#5b86ee" stroke="#5b86ee" stroke-width="0.18" text-anchor="middle" transform="translate(462 222) rotate(-90) scale(0.86 1)">17'</text>
<text x="0" y="0" dy="2.1" font-size="5.6" fill="#7c7c7c" stroke="#7c7c7c" stroke-width="0.18" text-anchor="middle" transform="translate(509.7 128) rotate(-41) scale(0.86 1)">20' 10"</text>
<text x="0" y="0" dy="2.1" font-size="5.6" fill="#7c7c7c" stroke="#7c7c7c" stroke-width="0.18" text-anchor="middle" transform="translate(517 155.6) rotate(48.5) scale(0.86 1)">13' 3"</text>
<text x="0" y="0" dy="2.1" font-size="5.6" fill="#7c7c7c" stroke="#7c7c7c" stroke-width="0.18" text-anchor="middle" transform="translate(407.7 326.6) rotate(48.5) scale(0.86 1)">51'</text>
<text x="0" y="0" dy="2.1" font-size="5.6" fill="#7c7c7c" stroke="#7c7c7c" stroke-width="0.18" text-anchor="middle" transform="translate(576.5 222.6) rotate(0) scale(0.86 1)">4' 3"</text>
<text x="0" y="0" dy="2.1" font-size="5.6" fill="#7c7c7c" stroke="#7c7c7c" stroke-width="0.18" text-anchor="middle" transform="translate(600 210.9) rotate(-41) scale(0.86 1)">11' 1"</text>
<text x="0" y="0" dy="2.1" font-size="5.6" fill="#7c7c7c" stroke="#7c7c7c" stroke-width="0.18" text-anchor="middle" transform="translate(623.2 223.2) rotate(48.5) scale(0.86 1)">26' 4"</text>
<text x="0" y="0" dy="2.1" font-size="5.6" fill="#7c7c7c" stroke="#7c7c7c" stroke-width="0.18" text-anchor="middle" transform="translate(499 375) rotate(-41) scale(0.86 1)">45' 1"</text>
<text x="0" y="0" dy="2.1" font-size="5.6" fill="#7c7c7c" stroke="#7c7c7c" stroke-width="0.18" text-anchor="middle" transform="translate(588 258) rotate(48.5) scale(0.86 1)">20'</text>
<text x="0" y="0" dy="2.1" font-size="5.6" fill="#7c7c7c" stroke="#7c7c7c" stroke-width="0.18" text-anchor="middle" transform="translate(470 222) rotate(48.5) scale(0.86 1)">13' 5"</text>
<text x="0" y="0" dy="2.1" font-size="5.6" fill="#7c7c7c" stroke="#7c7c7c" stroke-width="0.18" text-anchor="middle" transform="translate(386 240) rotate(-41) scale(0.86 1)">19' 2"</text>
<text x="0" y="0" dy="2.1" font-size="5.6" fill="#7c7c7c" stroke="#7c7c7c" stroke-width="0.18" text-anchor="middle" transform="translate(561 248) rotate(48.5) scale(0.86 1)">22' 1"</text>
<circle cx="414.6" cy="193.9" r="2.4" fill="none" stroke="#8a8a8a" stroke-width="0.6"/><text x="414.6" y="195.4" font-size="4.2" fill="#7a7a7a" text-anchor="middle">8</text>
<circle cx="420" cy="200" r="2.4" fill="none" stroke="#8a8a8a" stroke-width="0.6"/><text x="420" y="201.5" font-size="4.2" fill="#7a7a7a" text-anchor="middle">8</text>
<circle cx="424" cy="179" r="2.4" fill="none" stroke="#8a8a8a" stroke-width="0.6"/><text x="424" y="180.5" font-size="4.2" fill="#7a7a7a" text-anchor="middle">8</text>
<circle cx="441" cy="170.3" r="2.4" fill="none" stroke="#8a8a8a" stroke-width="0.6"/><text x="441" y="171.8" font-size="4.2" fill="#7a7a7a" text-anchor="middle">8</text>
<circle cx="446.4" cy="177" r="2.4" fill="none" stroke="#8a8a8a" stroke-width="0.6"/><text x="446.4" y="178.5" font-size="4.2" fill="#7a7a7a" text-anchor="middle">8</text>
<circle cx="569.4" cy="137.2" r="2.4" fill="none" stroke="#8a8a8a" stroke-width="0.6"/><text x="569.4" y="138.7" font-size="4.2" fill="#7a7a7a" text-anchor="middle">8</text>
<circle cx="577.7" cy="133.5" r="2.4" fill="none" stroke="#8a8a8a" stroke-width="0.6"/><text x="577.7" y="135.0" font-size="4.2" fill="#7a7a7a" text-anchor="middle">8</text>
<circle cx="605.2" cy="178.4" r="2.4" fill="none" stroke="#8a8a8a" stroke-width="0.6"/><text x="605.2" y="179.9" font-size="4.2" fill="#7a7a7a" text-anchor="middle">8</text>
<circle cx="614.3" cy="174.7" r="2.4" fill="none" stroke="#8a8a8a" stroke-width="0.6"/><text x="614.3" y="176.2" font-size="4.2" fill="#7a7a7a" text-anchor="middle">8</text>
<circle cx="597.8" cy="148.2" r="2.4" fill="none" stroke="#8a8a8a" stroke-width="0.6"/><text x="597.8" y="149.7" font-size="4.2" fill="#7a7a7a" text-anchor="middle">8</text>
<circle cx="395.5" cy="305" r="2.4" fill="none" stroke="#8a8a8a" stroke-width="0.6"/><text x="395.5" y="306.5" font-size="4.2" fill="#7a7a7a" text-anchor="middle">8</text>
<circle cx="402.3" cy="301" r="2.4" fill="none" stroke="#8a8a8a" stroke-width="0.6"/><text x="402.3" y="302.5" font-size="4.2" fill="#7a7a7a" text-anchor="middle">8</text>
<circle cx="403.6" cy="341.5" r="2.4" fill="none" stroke="#8a8a8a" stroke-width="0.6"/><text x="403.6" y="343.0" font-size="4.2" fill="#7a7a7a" text-anchor="middle">8</text>
<circle cx="442.8" cy="361.8" r="2.4" fill="none" stroke="#8a8a8a" stroke-width="0.6"/><text x="442.8" y="363.3" font-size="4.2" fill="#7a7a7a" text-anchor="middle">8</text>
<circle cx="449.6" cy="356.4" r="2.4" fill="none" stroke="#8a8a8a" stroke-width="0.6"/><text x="449.6" y="357.9" font-size="4.2" fill="#7a7a7a" text-anchor="middle">8</text>
<circle cx="590" cy="323" r="2.4" fill="none" stroke="#8a8a8a" stroke-width="0.6"/><text x="590" y="324.5" font-size="4.2" fill="#7a7a7a" text-anchor="middle">8</text>
<circle cx="596" cy="318" r="2.4" fill="none" stroke="#8a8a8a" stroke-width="0.6"/><text x="596" y="319.5" font-size="4.2" fill="#7a7a7a" text-anchor="middle">8</text>
<circle cx="622" cy="297" r="2.4" fill="none" stroke="#8a8a8a" stroke-width="0.6"/><text x="622" y="298.5" font-size="4.2" fill="#7a7a7a" text-anchor="middle">8</text>
<circle cx="628" cy="302" r="2.4" fill="none" stroke="#8a8a8a" stroke-width="0.6"/><text x="628" y="303.5" font-size="4.2" fill="#7a7a7a" text-anchor="middle">8</text>
<circle cx="640" cy="275" r="2.4" fill="none" stroke="#8a8a8a" stroke-width="0.6"/><text x="640" y="276.5" font-size="4.2" fill="#7a7a7a" text-anchor="middle">8</text>
<circle cx="646" cy="270" r="2.4" fill="none" stroke="#8a8a8a" stroke-width="0.6"/><text x="646" y="271.5" font-size="4.2" fill="#7a7a7a" text-anchor="middle">8</text>
<circle cx="545" cy="332" r="2.4" fill="none" stroke="#8a8a8a" stroke-width="0.6"/><text x="545" y="333.5" font-size="4.2" fill="#7a7a7a" text-anchor="middle">8</text>
<circle cx="488" cy="372" r="2.4" fill="none" stroke="#8a8a8a" stroke-width="0.6"/><text x="488" y="373.5" font-size="4.2" fill="#7a7a7a" text-anchor="middle">8</text>
<circle cx="495" cy="376" r="2.4" fill="none" stroke="#8a8a8a" stroke-width="0.6"/><text x="495" y="377.5" font-size="4.2" fill="#7a7a7a" text-anchor="middle">8</text>
<circle cx="535" cy="211" r="2.4" fill="none" stroke="#8a8a8a" stroke-width="0.6"/><text x="535" y="212.5" font-size="4.2" fill="#7a7a7a" text-anchor="middle">8</text>
<circle cx="537" cy="233" r="2.4" fill="none" stroke="#8a8a8a" stroke-width="0.6"/><text x="537" y="234.5" font-size="4.2" fill="#7a7a7a" text-anchor="middle">8</text>
<circle cx="553" cy="240" r="2.4" fill="none" stroke="#8a8a8a" stroke-width="0.6"/><text x="553" y="241.5" font-size="4.2" fill="#7a7a7a" text-anchor="middle">8</text>
<circle cx="560" cy="244" r="2.4" fill="none" stroke="#8a8a8a" stroke-width="0.6"/><text x="560" y="245.5" font-size="4.2" fill="#7a7a7a" text-anchor="middle">8</text>
<circle cx="536" cy="320" r="2.4" fill="none" stroke="#8a8a8a" stroke-width="0.6"/><text x="536" y="321.5" font-size="4.2" fill="#7a7a7a" text-anchor="middle">8</text>
<circle cx="540" cy="324" r="2.4" fill="none" stroke="#8a8a8a" stroke-width="0.6"/><text x="540" y="325.5" font-size="4.2" fill="#7a7a7a" text-anchor="middle">8</text>
<circle cx="520" cy="275" r="2.4" fill="none" stroke="#8a8a8a" stroke-width="0.6"/><text x="520" y="276.5" font-size="4.2" fill="#7a7a7a" text-anchor="middle">8</text>
<circle cx="527" cy="283" r="2.4" fill="none" stroke="#8a8a8a" stroke-width="0.6"/><text x="527" y="284.5" font-size="4.2" fill="#7a7a7a" text-anchor="middle">8</text>
<circle cx="480" cy="186" r="2.4" fill="none" stroke="#8a8a8a" stroke-width="0.6"/><text x="480" y="187.5" font-size="4.2" fill="#7a7a7a" text-anchor="middle">8</text>
<circle cx="487" cy="192" r="2.4" fill="none" stroke="#8a8a8a" stroke-width="0.6"/><text x="487" y="193.5" font-size="4.2" fill="#7a7a7a" text-anchor="middle">8</text>
<circle cx="500" cy="204" r="2.4" fill="none" stroke="#8a8a8a" stroke-width="0.6"/><text x="500" y="205.5" font-size="4.2" fill="#7a7a7a" text-anchor="middle">8</text>
<circle cx="520" cy="340" r="2.4" fill="none" stroke="#8a8a8a" stroke-width="0.6"/><text x="520" y="341.5" font-size="4.2" fill="#7a7a7a" text-anchor="middle">8</text>
<text x="539.5" y="170.5" font-size="6.8" fill="#0d0d0d" text-anchor="start" font-weight="bold" text-decoration="underline" textLength="24.5" lengthAdjust="spacingAndGlyphs">R18 (9)</text>
<text x="486.2" y="191" font-size="6.8" fill="#0d0d0d" text-anchor="start" font-weight="bold" text-decoration="underline" textLength="29" lengthAdjust="spacingAndGlyphs">R11 (11)</text>
<text x="434" y="229" font-size="6.8" fill="#0d0d0d" text-anchor="start" font-weight="bold" text-decoration="underline" textLength="27.5" lengthAdjust="spacingAndGlyphs">R14 (10)</text>
<text x="490.3" y="229.7" font-size="6.8" fill="#0d0d0d" text-anchor="start" font-weight="bold" text-decoration="underline" textLength="20.3" lengthAdjust="spacingAndGlyphs">R1 (5)</text>
<text x="570.4" y="259.5" font-size="6.8" fill="#0d0d0d" text-anchor="start" font-weight="bold" text-decoration="underline" textLength="19.5" lengthAdjust="spacingAndGlyphs">R5 (8)</text>
<text x="522" y="302" font-size="6.8" fill="#0d0d0d" text-anchor="start" font-weight="bold" text-decoration="underline" textLength="23.3" lengthAdjust="spacingAndGlyphs">R2C (3)</text>
<text x="594.5" y="291.5" font-size="6.8" fill="#0d0d0d" text-anchor="start" font-weight="bold" text-decoration="underline" textLength="24.3" lengthAdjust="spacingAndGlyphs">R35 (1)</text>
<text x="510.5" y="326" font-size="6.8" fill="#0d0d0d" text-anchor="start" font-weight="bold" text-decoration="underline" textLength="24.4" lengthAdjust="spacingAndGlyphs">R21 (7)</text>
<text x="472.9" y="335.5" font-size="6.8" fill="#0d0d0d" text-anchor="start" font-weight="bold" text-decoration="underline" textLength="19.2" lengthAdjust="spacingAndGlyphs">R7 (4)</text>
<text x="509.4" y="336" font-size="6.8" fill="#0d0d0d" text-anchor="start" font-weight="bold" text-decoration="underline" textLength="21.3" lengthAdjust="spacingAndGlyphs">R9 (2)</text>
<text x="477.5" y="357.5" font-size="6.8" fill="#0d0d0d" text-anchor="start" font-weight="bold" text-decoration="underline" textLength="19.7" lengthAdjust="spacingAndGlyphs">R3 (6)</text>
<text x="452.6" y="282" font-size="6.8" fill="#0d0d0d" text-anchor="start" font-weight="bold" textLength="8.7" lengthAdjust="spacingAndGlyphs">R2</text>
<text x="519" y="150.5" font-size="6.6" fill="#8c8c8c" text-anchor="start" textLength="8" lengthAdjust="spacingAndGlyphs">F7</text>
<text x="550.2" y="167" font-size="6.6" fill="#8c8c8c" text-anchor="start" textLength="21" lengthAdjust="spacingAndGlyphs">F20 (D)</text>
<text x="557" y="199.5" font-size="6.6" fill="#8c8c8c" text-anchor="start" textLength="22" lengthAdjust="spacingAndGlyphs">F19 (B)</text>
<text x="582" y="234" font-size="6.6" fill="#8c8c8c" text-anchor="start" textLength="7.5" lengthAdjust="spacingAndGlyphs">F9</text>
<text x="525" y="262" font-size="6.6" fill="#8c8c8c" text-anchor="start" textLength="19.5" lengthAdjust="spacingAndGlyphs">F8 (B)</text>
<text x="484.5" y="304.5" font-size="6.6" fill="#8c8c8c" text-anchor="start" textLength="21.5" lengthAdjust="spacingAndGlyphs">F11 (B)</text>
<text x="449" y="316" font-size="6.6" fill="#8c8c8c" text-anchor="start" textLength="7.5" lengthAdjust="spacingAndGlyphs">F6</text>
<text x="571.5" y="293.5" font-size="6.6" fill="#8c8c8c" text-anchor="start" textLength="20" lengthAdjust="spacingAndGlyphs">F16 (A)</text>
<text x="429" y="219.7" font-size="6.6" fill="#8c8c8c" text-anchor="start" textLength="20.3" lengthAdjust="spacingAndGlyphs">F23 (C)</text>
<text x="451.4" y="223" font-size="6.6" fill="#8c8c8c" text-anchor="start" textLength="20.3" lengthAdjust="spacingAndGlyphs">F21 (A)</text>
<text x="434.8" y="245.7" font-size="6.6" fill="#8c8c8c" text-anchor="start" textLength="19.5" lengthAdjust="spacingAndGlyphs">F22 (B)</text>
<text x="474.7" y="179.5" font-size="6.6" fill="#8c8c8c" text-anchor="start" textLength="19" lengthAdjust="spacingAndGlyphs">F25 (D)</text>
<text x="488.6" y="211.5" font-size="6.6" fill="#8c8c8c" text-anchor="start" textLength="17.5" lengthAdjust="spacingAndGlyphs">F24 (A)</text>
<text x="502.5" y="186" font-size="6.6" fill="#8c8c8c" text-anchor="start" textLength="18" lengthAdjust="spacingAndGlyphs">F26 (B)</text>
<text x="891.5" y="399.5" font-size="10.5" fill="#2f5797" text-anchor="start" font-weight="bold" textLength="45" lengthAdjust="spacingAndGlyphs">Main Level</text>
<text transform="translate(655.5 118.75) scale(1 1)" font-size="7.6" fill="#141414" stroke="#141414" stroke-width="0.1" text-anchor="start" font-weight="bold" textLength="18.75" lengthAdjust="spacingAndGlyphs">FACE</text>
<text transform="translate(764.8 118.75) scale(1 1)" font-size="7.6" fill="#141414" stroke="#141414" stroke-width="0.1" text-anchor="end" font-weight="bold" textLength="20.9" lengthAdjust="spacingAndGlyphs">SQ FT</text>
<text transform="translate(802 118.75) scale(1 1)" font-size="7.6" fill="#141414" stroke="#141414" stroke-width="0.1" text-anchor="end" font-weight="bold" textLength="20.75" lengthAdjust="spacingAndGlyphs"># SQs</text>
<text transform="translate(879.5 118.75) scale(1 1)" font-size="7.6" fill="#141414" stroke="#141414" stroke-width="0.1" text-anchor="end" font-weight="bold" textLength="62" lengthAdjust="spacingAndGlyphs">Slope - Rise / 12</text>
<rect x="655.5" y="120.6" width="225" height="1.3" fill="#111"/>
<text transform="translate(655.5 130.7) scale(0.915 1)" font-size="7.9" fill="#141414" stroke="#141414" stroke-width="0.1" text-anchor="start">F1</text>
<text transform="translate(764.8 130.7) scale(0.915 1)" font-size="7.9" fill="#141414" stroke="#141414" stroke-width="0.1" text-anchor="end">43.21</text>
<text transform="translate(802 130.7) scale(0.915 1)" font-size="7.9" fill="#141414" stroke="#141414" stroke-width="0.1" text-anchor="end">0.43</text>
<text transform="translate(879.5 130.7) scale(0.915 1)" font-size="7.9" fill="#141414" stroke="#141414" stroke-width="0.1" text-anchor="end">12.00</text>
<text transform="translate(655.5 140.41) scale(0.915 1)" font-size="7.9" fill="#141414" stroke="#141414" stroke-width="0.1" text-anchor="start">F2</text>
<text transform="translate(764.8 140.41) scale(0.915 1)" font-size="7.9" fill="#141414" stroke="#141414" stroke-width="0.1" text-anchor="end">140.21</text>
<text transform="translate(802 140.41) scale(0.915 1)" font-size="7.9" fill="#141414" stroke="#141414" stroke-width="0.1" text-anchor="end">1.40</text>
<text transform="translate(879.5 140.41) scale(0.915 1)" font-size="7.9" fill="#141414" stroke="#141414" stroke-width="0.1" text-anchor="end">12.00</text>
<text transform="translate(655.5 150.12) scale(0.915 1)" font-size="7.9" fill="#141414" stroke="#141414" stroke-width="0.1" text-anchor="start">F3</text>
<text transform="translate(764.8 150.12) scale(0.915 1)" font-size="7.9" fill="#141414" stroke="#141414" stroke-width="0.1" text-anchor="end">85.90</text>
<text transform="translate(802 150.12) scale(0.915 1)" font-size="7.9" fill="#141414" stroke="#141414" stroke-width="0.1" text-anchor="end">0.86</text>
<text transform="translate(879.5 150.12) scale(0.915 1)" font-size="7.9" fill="#141414" stroke="#141414" stroke-width="0.1" text-anchor="end">12.00</text>
<text transform="translate(655.5 159.83) scale(0.915 1)" font-size="7.9" fill="#141414" stroke="#141414" stroke-width="0.1" text-anchor="start">F4</text>
<text transform="translate(764.8 159.83) scale(0.915 1)" font-size="7.9" fill="#141414" stroke="#141414" stroke-width="0.1" text-anchor="end">159.69</text>
<text transform="translate(802 159.83) scale(0.915 1)" font-size="7.9" fill="#141414" stroke="#141414" stroke-width="0.1" text-anchor="end">1.60</text>
<text transform="translate(879.5 159.83) scale(0.915 1)" font-size="7.9" fill="#141414" stroke="#141414" stroke-width="0.1" text-anchor="end">12.00</text>
<text transform="translate(655.5 169.54) scale(0.915 1)" font-size="7.9" fill="#141414" stroke="#141414" stroke-width="0.1" text-anchor="start">F6</text>
<text transform="translate(764.8 169.54) scale(0.915 1)" font-size="7.9" fill="#141414" stroke="#141414" stroke-width="0.1" text-anchor="end">895.45</text>
<text transform="translate(802 169.54) scale(0.915 1)" font-size="7.9" fill="#141414" stroke="#141414" stroke-width="0.1" text-anchor="end">8.95</text>
<text transform="translate(879.5 169.54) scale(0.915 1)" font-size="7.9" fill="#141414" stroke="#141414" stroke-width="0.1" text-anchor="end">12.00</text>
<text transform="translate(655.5 179.25) scale(0.915 1)" font-size="7.9" fill="#141414" stroke="#141414" stroke-width="0.1" text-anchor="start">F7</text>
<text transform="translate(764.8 179.25) scale(0.915 1)" font-size="7.9" fill="#141414" stroke="#141414" stroke-width="0.1" text-anchor="end">1,006.29</text>
<text transform="translate(802 179.25) scale(0.915 1)" font-size="7.9" fill="#141414" stroke="#141414" stroke-width="0.1" text-anchor="end">10.06</text>
<text transform="translate(879.5 179.25) scale(0.915 1)" font-size="7.9" fill="#141414" stroke="#141414" stroke-width="0.1" text-anchor="end">9.00</text>
<text transform="translate(655.5 188.96) scale(0.915 1)" font-size="7.9" fill="#141414" stroke="#141414" stroke-width="0.1" text-anchor="start">F8</text>
<text transform="translate(764.8 188.96) scale(0.915 1)" font-size="7.9" fill="#141414" stroke="#141414" stroke-width="0.1" text-anchor="end">471.37</text>
<text transform="translate(802 188.96) scale(0.915 1)" font-size="7.9" fill="#141414" stroke="#141414" stroke-width="0.1" text-anchor="end">4.71</text>
<text transform="translate(879.5 188.96) scale(0.915 1)" font-size="7.9" fill="#141414" stroke="#141414" stroke-width="0.1" text-anchor="end">7.20</text>
<text transform="translate(655.5 198.67) scale(0.915 1)" font-size="7.9" fill="#141414" stroke="#141414" stroke-width="0.1" text-anchor="start">F9</text>
<text transform="translate(764.8 198.67) scale(0.915 1)" font-size="7.9" fill="#141414" stroke="#141414" stroke-width="0.1" text-anchor="end">638.09</text>
<text transform="translate(802 198.67) scale(0.915 1)" font-size="7.9" fill="#141414" stroke="#141414" stroke-width="0.1" text-anchor="end">6.38</text>
<text transform="translate(879.5 198.67) scale(0.915 1)" font-size="7.9" fill="#141414" stroke="#141414" stroke-width="0.1" text-anchor="end">12.00</text>
<text transform="translate(655.5 208.38) scale(0.915 1)" font-size="7.9" fill="#141414" stroke="#141414" stroke-width="0.1" text-anchor="start">F11</text>
<text transform="translate(764.8 208.38) scale(0.915 1)" font-size="7.9" fill="#141414" stroke="#141414" stroke-width="0.1" text-anchor="end">264.77</text>
<text transform="translate(802 208.38) scale(0.915 1)" font-size="7.9" fill="#141414" stroke="#141414" stroke-width="0.1" text-anchor="end">2.65</text>
<text transform="translate(879.5 208.38) scale(0.915 1)" font-size="7.9" fill="#141414" stroke="#141414" stroke-width="0.1" text-anchor="end">9.00</text>
<text transform="translate(655.5 218.09) scale(0.915 1)" font-size="7.9" fill="#141414" stroke="#141414" stroke-width="0.1" text-anchor="start">F14</text>
<text transform="translate(764.8 218.09) scale(0.915 1)" font-size="7.9" fill="#141414" stroke="#141414" stroke-width="0.1" text-anchor="end">21.13</text>
<text transform="translate(802 218.09) scale(0.915 1)" font-size="7.9" fill="#141414" stroke="#141414" stroke-width="0.1" text-anchor="end">0.21</text>
<text transform="translate(879.5 218.09) scale(0.915 1)" font-size="7.9" fill="#141414" stroke="#141414" stroke-width="0.1" text-anchor="end">3.00</text>
<text transform="translate(655.5 227.8) scale(0.915 1)" font-size="7.9" fill="#141414" stroke="#141414" stroke-width="0.1" text-anchor="start">F15</text>
<text transform="translate(764.8 227.8) scale(0.915 1)" font-size="7.9" fill="#141414" stroke="#141414" stroke-width="0.1" text-anchor="end">5.25</text>
<text transform="translate(802 227.8) scale(0.915 1)" font-size="7.9" fill="#141414" stroke="#141414" stroke-width="0.1" text-anchor="end">0.05</text>
<text transform="translate(879.5 227.8) scale(0.915 1)" font-size="7.9" fill="#141414" stroke="#141414" stroke-width="0.1" text-anchor="end">3.24</text>
<text transform="translate(655.5 237.51) scale(0.915 1)" font-size="7.9" fill="#141414" stroke="#141414" stroke-width="0.1" text-anchor="start">F16</text>
<text transform="translate(764.8 237.51) scale(0.915 1)" font-size="7.9" fill="#141414" stroke="#141414" stroke-width="0.1" text-anchor="end">324.44</text>
<text transform="translate(802 237.51) scale(0.915 1)" font-size="7.9" fill="#141414" stroke="#141414" stroke-width="0.1" text-anchor="end">3.24</text>
<text transform="translate(879.5 237.51) scale(0.915 1)" font-size="7.9" fill="#141414" stroke="#141414" stroke-width="0.1" text-anchor="end">12.00</text>
<text transform="translate(655.5 247.22) scale(0.915 1)" font-size="7.9" fill="#141414" stroke="#141414" stroke-width="0.1" text-anchor="start">F19</text>
<text transform="translate(764.8 247.22) scale(0.915 1)" font-size="7.9" fill="#141414" stroke="#141414" stroke-width="0.1" text-anchor="end">185.59</text>
<text transform="translate(802 247.22) scale(0.915 1)" font-size="7.9" fill="#141414" stroke="#141414" stroke-width="0.1" text-anchor="end">1.86</text>
<text transform="translate(879.5 247.22) scale(0.915 1)" font-size="7.9" fill="#141414" stroke="#141414" stroke-width="0.1" text-anchor="end">9.00</text>
<text transform="translate(655.5 256.93) scale(0.915 1)" font-size="7.9" fill="#141414" stroke="#141414" stroke-width="0.1" text-anchor="start">F20</text>
<text transform="translate(764.8 256.93) scale(0.915 1)" font-size="7.9" fill="#141414" stroke="#141414" stroke-width="0.1" text-anchor="end">354.79</text>
<text transform="translate(802 256.93) scale(0.915 1)" font-size="7.9" fill="#141414" stroke="#141414" stroke-width="0.1" text-anchor="end">3.55</text>
<text transform="translate(879.5 256.93) scale(0.915 1)" font-size="7.9" fill="#141414" stroke="#141414" stroke-width="0.1" text-anchor="end">12.00</text>
<text transform="translate(655.5 266.64) scale(0.915 1)" font-size="7.9" fill="#141414" stroke="#141414" stroke-width="0.1" text-anchor="start">F21</text>
<text transform="translate(764.8 266.64) scale(0.915 1)" font-size="7.9" fill="#141414" stroke="#141414" stroke-width="0.1" text-anchor="end">110.75</text>
<text transform="translate(802 266.64) scale(0.915 1)" font-size="7.9" fill="#141414" stroke="#141414" stroke-width="0.1" text-anchor="end">1.11</text>
<text transform="translate(879.5 266.64) scale(0.915 1)" font-size="7.9" fill="#141414" stroke="#141414" stroke-width="0.1" text-anchor="end">12.00</text>
<text transform="translate(655.5 276.35) scale(0.915 1)" font-size="7.9" fill="#141414" stroke="#141414" stroke-width="0.1" text-anchor="start">F22</text>
<text transform="translate(764.8 276.35) scale(0.915 1)" font-size="7.9" fill="#141414" stroke="#141414" stroke-width="0.1" text-anchor="end">110.75</text>
<text transform="translate(802 276.35) scale(0.915 1)" font-size="7.9" fill="#141414" stroke="#141414" stroke-width="0.1" text-anchor="end">1.11</text>
<text transform="translate(879.5 276.35) scale(0.915 1)" font-size="7.9" fill="#141414" stroke="#141414" stroke-width="0.1" text-anchor="end">12.00</text>
<text transform="translate(655.5 286.06) scale(0.915 1)" font-size="7.9" fill="#141414" stroke="#141414" stroke-width="0.1" text-anchor="start">F23</text>
<text transform="translate(764.8 286.06) scale(0.915 1)" font-size="7.9" fill="#141414" stroke="#141414" stroke-width="0.1" text-anchor="end">236.34</text>
<text transform="translate(802 286.06) scale(0.915 1)" font-size="7.9" fill="#141414" stroke="#141414" stroke-width="0.1" text-anchor="end">2.36</text>
<text transform="translate(879.5 286.06) scale(0.915 1)" font-size="7.9" fill="#141414" stroke="#141414" stroke-width="0.1" text-anchor="end">9.00</text>
<text transform="translate(655.5 295.77) scale(0.915 1)" font-size="7.9" fill="#141414" stroke="#141414" stroke-width="0.1" text-anchor="start">F24</text>
<text transform="translate(764.8 295.77) scale(0.915 1)" font-size="7.9" fill="#141414" stroke="#141414" stroke-width="0.1" text-anchor="end">145.67</text>
<text transform="translate(802 295.77) scale(0.915 1)" font-size="7.9" fill="#141414" stroke="#141414" stroke-width="0.1" text-anchor="end">1.46</text>
<text transform="translate(879.5 295.77) scale(0.915 1)" font-size="7.9" fill="#141414" stroke="#141414" stroke-width="0.1" text-anchor="end">8.50</text>
<text transform="translate(655.5 305.48) scale(0.915 1)" font-size="7.9" fill="#141414" stroke="#141414" stroke-width="0.1" text-anchor="start">F25</text>
<text transform="translate(764.8 305.48) scale(0.915 1)" font-size="7.9" fill="#141414" stroke="#141414" stroke-width="0.1" text-anchor="end">145.67</text>
<text transform="translate(802 305.48) scale(0.915 1)" font-size="7.9" fill="#141414" stroke="#141414" stroke-width="0.1" text-anchor="end">1.46</text>
<text transform="translate(879.5 305.48) scale(0.915 1)" font-size="7.9" fill="#141414" stroke="#141414" stroke-width="0.1" text-anchor="end">8.50</text>
<text transform="translate(655.5 315.19) scale(0.915 1)" font-size="7.9" fill="#141414" stroke="#141414" stroke-width="0.1" text-anchor="start">F26</text>
<text transform="translate(764.8 315.19) scale(0.915 1)" font-size="7.9" fill="#141414" stroke="#141414" stroke-width="0.1" text-anchor="end">95.47</text>
<text transform="translate(802 315.19) scale(0.915 1)" font-size="7.9" fill="#141414" stroke="#141414" stroke-width="0.1" text-anchor="end">0.95</text>
<text transform="translate(879.5 315.19) scale(0.915 1)" font-size="7.9" fill="#141414" stroke="#141414" stroke-width="0.1" text-anchor="end">9.00</text>
<text transform="translate(655.5 324.9) scale(0.915 1)" font-size="7.9" fill="#141414" stroke="#141414" stroke-width="0.1" text-anchor="start">F27</text>
<text transform="translate(764.8 324.9) scale(0.915 1)" font-size="7.9" fill="#141414" stroke="#141414" stroke-width="0.1" text-anchor="end">35.84</text>
<text transform="translate(802 324.9) scale(0.915 1)" font-size="7.9" fill="#141414" stroke="#141414" stroke-width="0.1" text-anchor="end">0.36</text>
<text transform="translate(879.5 324.9) scale(0.915 1)" font-size="7.9" fill="#141414" stroke="#141414" stroke-width="0.1" text-anchor="end">3.00</text>
<rect x="655.5" y="327.6" width="225" height="1.3" fill="#111"/>
<text transform="translate(655.5 338) scale(1 1)" font-size="7.6" fill="#141414" stroke="#141414" stroke-width="0.1" text-anchor="start" font-weight="bold" textLength="60" lengthAdjust="spacingAndGlyphs">Estimated Total:</text>
<text transform="translate(765 338) scale(1 1)" font-size="7.6" fill="#141414" stroke="#141414" stroke-width="0.1" text-anchor="end" font-weight="bold" textLength="30.5" lengthAdjust="spacingAndGlyphs">5476.65</text>
<text transform="translate(802 338) scale(1 1)" font-size="7.6" fill="#141414" stroke="#141414" stroke-width="0.1" text-anchor="end" font-weight="bold" textLength="20.5" lengthAdjust="spacingAndGlyphs">54.77</text></g></svg>
<div class="a" style="left:285px;top:395px;width:660.5px;height:15px;background:#b5b5b5;border:1px solid #9ea7b3;border-top:none"></div>
<div class="a" style="left:151px;top:108px;width:69.6px;height:11.6px;background:#fff;border:1px solid #c8d3e0;border-radius:1px"></div>
<div class="a" style="left:213.2px;top:108.5px;width:7px;height:10.6px;background:linear-gradient(#f4f7fb,#e2e9f2);border-left:1px solid #d0d9e4"></div>
<div class="a" style="left:225.3px;top:107.5px;width:52.4px;height:12.5px;background:linear-gradient(#f2f6fb,#dfe8f3);border:1px solid #c9d5e3;border-radius:1px"></div>
<div class="a" style="left:269.2px;top:108px;width:1px;height:11.5px;background:#c5d1df"></div>
<svg width="960" height="518" viewBox="0 0 960 518"><path d="M215.5 113.3 h2.6 l-1.3 1.5z" fill="#333"/><path d="M271.8 113.3 h3.4 l-1.7 1.9z" fill="#1a1a2a"/></svg>
<div class="t" style="left:238.80px;top:110.37px;font-size:7px;color:#8f8f8f;transform:scaleX(0.816);">Search</div>
<div class="a" style="left:147.9px;top:400px;width:131.4px;height:13.8px;background:#f2f5f9;border-top:1px solid #dfe5ec"></div>
<div class="a" style="left:147.5px;top:399.8px;width:27.5px;height:13.5px;background:#fcfcfc;border:1px solid #cdd7e3;border-top:none;border-radius:0 0 2px 2px"></div>
<div class="t" style="left:150.70px;top:403.07px;font-size:7.6px;color:#9a9a9a;transform:scaleX(0.880);">Search</div>
<div class="t" style="left:177.60px;top:403.07px;font-size:7.6px;color:#8f8f8f;transform:scaleX(0.883);">Images</div>
<div class="a" style="left:203px;top:402px;width:0.8px;height:10px;background:#d6dde6"></div>
<div class="t" style="left:205.30px;top:403.07px;font-size:7.6px;color:#8f8f8f;transform:scaleX(0.876);">Symbols</div>
<div class="a" style="left:234.5px;top:402px;width:0.8px;height:10px;background:#d6dde6"></div>
<div class="a" style="left:286.7px;top:396px;width:55.5px;height:12px;background:#e3e3e3"></div>
<div class="a" style="left:333.6px;top:396px;width:8.6px;height:12px;background:linear-gradient(#e8eef6,#d5e0ec)"></div>
<div class="t" style="left:289.80px;top:398.66px;font-size:8.2px;color:#8796a8;transform:scaleX(0.725);">SKETCH1</div>
<svg width="960" height="518" viewBox="0 0 960 518"><path d="M336.4 401 h3.4 l-1.7 1.9z" fill="#1f3a6a"/></svg>
<div class="a" style="left:348.4px;top:394.7px;width:49.3px;height:12.4px;background:#fff;border:1px solid #555;border-top:none;border-radius:0 0 3px 3px"></div>
<div class="t" style="left:351.60px;top:397.43px;font-size:8px;color:#a0a0a0;transform:scaleX(0.826);">Main Level</div>
<div class="a" style="left:388px;top:399px;width:5.4px;height:5.4px;background:#e0603a;border:0.5px solid #b03020;border-radius:1px"></div>
<svg width="960" height="518" viewBox="0 0 960 518"><path d="M389.3 400.3 l2.8 2.8 M392.1 400.3 l-2.8 2.8" stroke="#fff" stroke-width="0.7"/></svg>
<div class="a" style="left:398.4px;top:395px;width:10.4px;height:11.5px;background:#c8c8c8;border:1px solid #555;border-top:none;border-radius:0 0 2px 2px"></div>
<div class="t" style="left:401.00px;top:397.23px;font-size:8px;color:#555;">+</div>
<div class="a" style="left:785px;top:395.8px;width:159px;height:13.6px;background:linear-gradient(#eef3f9,#dfe7f1);border:1px solid #c9d4e1"></div>
<div class="t" style="left:790.80px;top:399.37px;font-size:7px;color:#7f8fa3;transform:scaleX(0.807);">View</div>
<svg width="960" height="518" viewBox="0 0 960 518"><path d="M812.5 402 h3.2 l-1.6 1.8z" fill="#1f2f4a"/><path d="M818.3 396.5 v12.5 M835 396.5 v12.5 M902.7 396.5 v12.5" stroke="#c0cad6" stroke-width="0.8"/><rect x="822.8" y="399" width="7" height="7" fill="#fff" stroke="#222" stroke-width="0.9"/><path d="M839 404 v-3.5 a0.8 0.8 0 0 1 1.6 0 v-1.5 a0.8 0.8 0 0 1 1.6 0 v1 a0.8 0.8 0 0 1 1.6 0 v1.5 a0.8 0.8 0 0 1 1.5 0 v3 q0 3-3 3 h-1.2 q-1.5 0-2.5-2z" fill="#fff" stroke="#333" stroke-width="0.6"/><circle cx="853.5" cy="401.5" r="2.8" fill="#d8e8f8" stroke="#3060a0" stroke-width="0.9"/><path d="M852 401.5 h3 M855.5 403.5 l2.5 2.7" stroke="#3060a0" stroke-width="0.9"/><path d="M855.6 403.6 l2.4 2.6" stroke="#c09020" stroke-width="1.3"/><circle cx="866.5" cy="401.5" r="2.8" fill="#d8e8f8" stroke="#3060a0" stroke-width="0.9"/><path d="M865 401.5 h3 M866.5 400 v3" stroke="#3060a0" stroke-width="0.9"/><path d="M868.6 403.6 l2.4 2.6" stroke="#c09020" stroke-width="1.3"/><circle cx="879.5" cy="401.5" r="2.8" fill="#a8c8f0" stroke="#3060a0" stroke-width="0.9"/><path d="M881.6 403.6 l2.4 2.6" stroke="#c09020" stroke-width="1.3"/><circle cx="892.5" cy="401.5" r="2.8" fill="#f0e0e0" stroke="#b8b8c8" stroke-width="0.8"/><path d="M894.6 403.6 l2.4 2.6" stroke="#d0c0a0" stroke-width="1.2"/><rect x="906" y="399" width="7" height="7" fill="#f4f6fa" stroke="#dde3ea" stroke-width="0.6"/><rect x="918.5" y="399" width="6.5" height="7.5" fill="#fff" stroke="#555" stroke-width="0.6"/><path d="M921.8 405 v-4 M920.3 402.3 l1.5-1.5 1.5 1.5" stroke="#222" stroke-width="0.7" fill="none"/><path d="M931 401 l4-2 4 2 v4 l-4 2 -4-2z" fill="#1a2a8a"/><path d="M931 401 l4 2 4-2 l-4-2z" fill="#f0f0f0"/><path d="M935 403 v4 l4-2 v-4z" fill="#1a1a3a"/><path d="M930.8 375 v-5.5 l3.6 5.5 v-5.5" stroke="#5a78b0" stroke-width="1" fill="none"/><path d="M933 376 l-2.8 2.8 h1.7 v3.8 h2.2 v-3.8 h1.7z" fill="none" stroke="#5070b0" stroke-width="0.7"/></svg>
<div class="a" style="left:145px;top:413.5px;width:806px;height:104px;background:#f1f4f8"></div>
<div class="a" style="left:147.5px;top:416.4px;width:799.7px;height:98.6px;background:#fbfbfc;border:1px solid #c9d4e0"></div>
<div class="t" style="left:149.60px;top:416.90px;font-size:7.8px;color:#3a3a3a;transform:scaleX(0.909);">Items</div>
<div class="a" style="left:149.2px;top:425.6px;width:797px;height:15.8px;background:linear-gradient(#ffffff,#e9eef5);border:1px solid #ccd8e6"></div>
<div class="a" style="left:149.2px;top:441.2px;width:797px;height:12.6px;background:#fff;border:1px solid #b3c5db"></div>
<div class="a" style="left:165.4px;top:426px;width:0.8px;height:15px;background:#d3dde9"></div>
<div class="a" style="left:165.4px;top:442px;width:0.8px;height:11px;background:#e3e9f1"></div>
<div class="a" style="left:179.4px;top:426px;width:0.8px;height:15px;background:#d3dde9"></div>
<div class="a" style="left:179.4px;top:442px;width:0.8px;height:11px;background:#e3e9f1"></div>
<div class="a" style="left:193.3px;top:426px;width:0.8px;height:15px;background:#d3dde9"></div>
<div class="a" style="left:193.3px;top:442px;width:0.8px;height:11px;background:#e3e9f1"></div>
<div class="a" style="left:206.9px;top:426px;width:0.8px;height:15px;background:#d3dde9"></div>
<div class="a" style="left:206.9px;top:442px;width:0.8px;height:11px;background:#e3e9f1"></div>
<div class="a" style="left:235.6px;top:426px;width:0.8px;height:15px;background:#d3dde9"></div>
<div class="a" style="left:235.6px;top:442px;width:0.8px;height:11px;background:#e3e9f1"></div>
<div class="a" style="left:375.5px;top:426px;width:0.8px;height:15px;background:#d3dde9"></div>
<div class="a" style="left:375.5px;top:442px;width:0.8px;height:11px;background:#e3e9f1"></div>
<div class="a" style="left:408.4px;top:426px;width:0.8px;height:15px;background:#d3dde9"></div>
<div class="a" style="left:408.4px;top:442px;width:0.8px;height:11px;background:#e3e9f1"></div>
<div class="a" style="left:468.6px;top:426px;width:0.8px;height:15px;background:#d3dde9"></div>
<div class="a" style="left:468.6px;top:442px;width:0.8px;height:11px;background:#e3e9f1"></div>
<div class="a" style="left:500px;top:426px;width:0.8px;height:15px;background:#d3dde9"></div>
<div class="a" style="left:500px;top:442px;width:0.8px;height:11px;background:#e3e9f1"></div>
<div class="a" style="left:516.3px;top:426px;width:0.8px;height:15px;background:#d3dde9"></div>
<div class="a" style="left:516.3px;top:442px;width:0.8px;height:11px;background:#e3e9f1"></div>
<div class="a" style="left:550.6px;top:426px;width:0.8px;height:15px;background:#d3dde9"></div>
<div class="a" style="left:550.6px;top:442px;width:0.8px;height:11px;background:#e3e9f1"></div>
<div class="a" style="left:583px;top:426px;width:0.8px;height:15px;background:#d3dde9"></div>
<div class="a" style="left:583px;top:442px;width:0.8px;height:11px;background:#e3e9f1"></div>
<div class="a" style="left:599.6px;top:426px;width:0.8px;height:15px;background:#d3dde9"></div>
<div class="a" style="left:599.6px;top:442px;width:0.8px;height:11px;background:#e3e9f1"></div>
<div class="a" style="left:642.8px;top:426px;width:0.8px;height:15px;background:#d3dde9"></div>
<div class="a" style="left:642.8px;top:442px;width:0.8px;height:11px;background:#e3e9f1"></div>
<div class="a" style="left:659.5px;top:426px;width:0.8px;height:15px;background:#d3dde9"></div>
<div class="a" style="left:659.5px;top:442px;width:0.8px;height:11px;background:#e3e9f1"></div>
<div class="a" style="left:672px;top:426px;width:0.8px;height:15px;background:#d3dde9"></div>
<div class="a" style="left:672px;top:442px;width:0.8px;height:11px;background:#e3e9f1"></div>
<div class="t" style="left:151.70px;top:429.57px;font-size:7.6px;color:#8a8a8a;transform:scaleX(0.705);">#</div>
<div class="t" style="left:167.90px;top:429.57px;font-size:7.6px;color:#8a8a8a;transform:scaleX(0.843);">Cat</div>
<div class="t" style="left:182.50px;top:429.57px;font-size:7.6px;color:#8a8a8a;transform:scaleX(0.853);">Sel</div>
<div class="t" style="left:196.00px;top:429.57px;font-size:7.6px;color:#8a8a8a;transform:scaleX(0.853);">Act</div>
<div class="t" style="left:210.60px;top:429.57px;font-size:7.6px;color:#8a8a8a;transform:scaleX(0.872);">Notes</div>
<div class="t" style="left:238.75px;top:429.57px;font-size:7.6px;color:#8a8a8a;transform:scaleX(0.905);">Description</div>
<div class="t" style="left:379.00px;top:429.57px;font-size:7.6px;color:#8a8a8a;transform:scaleX(0.828);">Coverage</div>
<div class="t" style="left:412.00px;top:429.57px;font-size:7.6px;color:#8a8a8a;transform:scaleX(0.816);">Calc</div>
<div class="t" style="left:471.50px;top:429.57px;font-size:7.6px;color:#8a8a8a;transform:scaleX(0.937);">Quantity</div>
<div class="t" style="left:502.20px;top:429.57px;font-size:7.6px;color:#8a8a8a;transform:scaleX(0.887);">Unit</div>
<div class="t" style="left:519.40px;top:429.57px;font-size:7.6px;color:#8a8a8a;transform:scaleX(0.884);">Unit Price</div>
<div class="t" style="left:552.70px;top:429.57px;font-size:7.6px;color:#8a8a8a;transform:scaleX(0.856);">Sales Tax</div>
<div class="t" style="left:585.00px;top:429.57px;font-size:7.6px;color:#8a8a8a;transform:scaleX(0.779);">RCV</div>
<div class="t" style="left:601.70px;top:429.57px;font-size:7.6px;color:#8a8a8a;transform:scaleX(0.915);">Depreciation</div>
<div class="t" style="left:645.40px;top:429.57px;font-size:7.6px;color:#8a8a8a;transform:scaleX(0.805);">ACV</div>
<div class="a" style="left:950.5px;top:50px;width:8px;height:467px;background:#ececec;border-left:1px solid #e4e4e4"></div>
<div class="a" style="left:958.6px;top:0px;width:1.4px;height:518px;background:#4a5a68"></div>
<div class="a" style="left:0px;top:516.8px;width:960px;height:1.2px;background:#4a5a68"></div>
<div class="a" style="left:0px;top:0px;width:960px;height:1.1px;background:#4b5b69"></div>
<svg width="960" height="518" viewBox="0 0 960 518"><g stroke="#e8ecef" stroke-width="1.1" fill="none" stroke-linecap="round"><path d="M129.5 15.3 L127 17.55 L129.5 19.8 M127 17.55 H133.6 M130.6 20.4 H136.6 M130.6 22.9 H136.6"/></g><circle cx="21.5" cy="117.1" r="5.8" fill="#fff"/><rect x="21" y="115.3" width="1.1" height="4.9" fill="#4f6373"/><rect x="21" y="113.2" width="1.1" height="1.1" fill="#4f6373"/><path d="M15.4 143.5 L19.5 138.6 L23 141 L18.3 147 L18 149.3 L16.3 149.3 Z" fill="#fff"/><path d="M18.6 149.2 L25.2 141.6 L27.4 143.4 L20.8 150 L18.4 150.2 Z" fill="#fff"/><path d="M17.6 148.9 L24.6 140.6" stroke="#243444" stroke-width="0.8"/><path d="M15.8 221.5 V230.8 H25.2" stroke="#fff" stroke-width="1.3" fill="none"/><rect x="18.1" y="219.2" width="9" height="9.7" rx="0.6" fill="#fff"/><path d="M19.6 226.6 L21.2 224.8 L22.4 226 L23.8 224.3 L25.6 226.6 Z" fill="#4f6373"/><path d="M15.8 248 V257.3 H25.2" stroke="#fff" stroke-width="1.3" fill="none"/><rect x="18.1" y="245.8" width="9" height="10.1" rx="0.6" fill="#fff"/><rect x="19.6" y="247.6" width="6" height="1.3" fill="#9aa6b0"/><rect x="19.6" y="249.9" width="6" height="1.3" fill="#9aa6b0"/><rect x="19.6" y="252.3" width="3.5" height="1.2" fill="#4f6373"/><path d="M17.2 273 A3.6 3.6 0 1 0 19.6 278.3 L26 284.9 L27.6 283.3 L21.2 276.7 A3.6 3.6 0 0 0 16.6 272.6 L18.6 274.7 L17.6 276.5 L15.6 276.6 L14.9 275.4" fill="#fff"/><rect x="16.2" y="301.3" width="10.6" height="10" rx="0.8" fill="#fff"/><rect x="20" y="300" width="3" height="2.5" rx="0.8" fill="#fff"/><path d="M18.6 306.4 L20.6 308.4 L24.6 304" stroke="#4f6373" stroke-width="1.2" fill="none"/><path d="M17.2 471.8 L25.3 479.5 M25.3 471.8 L17.2 479.5" stroke="#fff" stroke-width="1.3"/><path d="M130.6 70.2 L132.6 72 L130.6 73.8 M130.6 83 L132.6 84.8 L130.6 86.6" stroke="#1fa8d8" stroke-width="0.9" fill="none"/><circle cx="211.5" cy="23" r="3.6" fill="none" stroke="#2fb56c" stroke-width="1.2" stroke-dasharray="19 4" transform="rotate(-40 211.5 23)"/><path d="M209.6 22.6 l1.5 1.6 3.6-4" stroke="#2fb56c" stroke-width="1.2" fill="none"/><path d="M245.3 21.2 l3 3.1 3-3.1" stroke="#8c8c8c" stroke-width="1.15" fill="none"/><path d="M915.5 5.2 h4" stroke="#d8d8d8" stroke-width="0.7"/><rect x="931.5" y="2.5" width="5.5" height="5" fill="none" stroke="#dde2ec" stroke-width="0.7"/><path d="M949.2 3 l4 4 M953.2 3 l-4 4" stroke="#d5d5d5" stroke-width="0.7"/><rect x="145" y="50.7" width="12" height="11.8" fill="#f5a31a" stroke="#5a3a10" stroke-width="0.8"/><path d="M148.5 52.5 v7.5 l1.8-1.7 1.4 2.7 1.1-0.6 -1.4-2.6 2.4-0.2z" fill="#fff" stroke="#333" stroke-width="0.6"/><path d="M160.5 56.5 l2-1.8 M160.5 56.5 l2.3 0.8 M160.8 56.5 q3-3.5 5.8-0.5 q0.5 1.5-0.6 2.6" stroke="#5f7fb8" stroke-width="0.8" fill="none"/><rect x="171" y="52.8" width="5" height="5.5" fill="#f0f0f0" stroke="#8a8a8a" stroke-width="0.6"/><rect x="174" y="55.3" width="5.5" height="5" fill="#e8e8f0" stroke="#7a80a8" stroke-width="0.6"/><rect x="184" y="53.3" width="5.5" height="6" fill="#d8c8a0" stroke="#8a8070" stroke-width="0.6"/><rect x="187.5" y="56" width="5.5" height="4.5" fill="#e8e8f0" stroke="#7a80a8" stroke-width="0.6"/><path d="M199 52.8 l1.5 4.5 M202.5 52.8 l-1.5 4.5" stroke="#777" stroke-width="0.6"/><circle cx="198.8" cy="59.3" r="1.2" fill="none" stroke="#6070b0" stroke-width="0.7"/><circle cx="202.6" cy="59.3" r="1.2" fill="none" stroke="#6070b0" stroke-width="0.7"/><path d="M210.5 58.5 v-2 a2 2 0 0 1 4 0 v2 z" fill="#8090b0" stroke="#6a7898" stroke-width="0.6"/><rect x="221.2" y="53" width="5.5" height="7" fill="#f4f4f4" stroke="#b8b8b8" stroke-width="0.5"/><path d="M223.5 58.5 l2 -1.5 2 1.5 -2 1.5z" fill="#3db050"/><rect x="150.3" y="65.6" width="7.6" height="7.4" fill="#cfe3f5" stroke="#4b6a8e" stroke-width="0.8"/><path d="M151 73.4 v1.3 M157.3 73.4 v1.3 M158.3 66.5 h0.9 M158.3 72 h0.9" stroke="#e0a030" stroke-width="0.9"/><path d="M150.3 88 V79.2 H158.3" stroke="#4b6a8e" stroke-width="1.5" fill="none"/><path d="M153.5 81.5 h2.3 M153.5 83.5 h2.3 M153.5 85.5 h2.3" stroke="#d9a040" stroke-width="0.8"/><path d="M199.4 66 h6.3 v2 h2.3 v1.5 h-1 v2 h1 v3.2 h-8.6 z" fill="#f3c245" stroke="#6f7fa6" stroke-width="0.8" stroke-linejoin="round"/><path d="M202.6 66.3 v8.2" stroke="#d39a20" stroke-width="0.9"/><circle cx="203.5" cy="69.5" r="0.8" fill="#8ab040"/><rect x="203.6" y="80.8" width="5" height="6.8" fill="#f0f0f0" stroke="#c8c8c8" stroke-width="0.5"/><path d="M199.6 86.6 l1.6-0.4 0.5-1.6 1.7-0.4 0.5-1.6 1.7-0.4 0.5-1.6 1.6-0.6" stroke="#e8a820" stroke-width="1.3" fill="none"/><circle cx="200.6" cy="87" r="0.5" fill="#2f4f80"/><circle cx="203" cy="85.4" r="0.5" fill="#2f4f80"/><path d="M256.2 69.6 l3.9-4.2 3.7 4.2" stroke="#d8a020" stroke-width="1" fill="#dfeefa"/><rect x="256" y="70.2" width="8.7" height="3.6" fill="#3f64a0"/><path d="M256.5 72 h7.8" stroke="#9fb8dc" stroke-width="0.5"/><rect x="256.2" y="79.3" width="8.3" height="8.2" fill="#d8dde6" stroke="#555e6e" stroke-width="0.8"/><path d="M256.6 79.3 v8.2 M264.1 79.3 v8.2" stroke="#3f4f6a" stroke-width="1.2"/><path d="M259.4 80.5 v6.5 M261.5 80.5 v6.5" stroke="#e0b030" stroke-width="0.9"/><path d="M293 72.6 v-1 l2.8-4.5 5.2 4.6 v0.9" stroke="#3a5a90" stroke-width="1.1" fill="none"/><path d="M294 71.5 l1.8-4.4" stroke="#e0b040" stroke-width="0.6"/><path d="M294 83 h6.8" stroke="#3a5a90" stroke-width="1"/><path d="M293.4 81.2 q1.2 1.8 0 3.6 M301.4 81.2 q-1.2 1.8 0 3.6" stroke="#3a5a90" stroke-width="1.1" fill="none"/><path d="M349.3 69.5 h7.5 M349.3 68 v3 M352 68 v3 M354 68 v3 M356.8 68 v3" stroke="#3d5f9a" stroke-width="0.8" fill="none"/><path d="M350 83.2 h6.5 M353.3 79.5 v8" stroke="#333" stroke-width="0.9" fill="none"/><path d="M351.5 81.5 v3.5 M355 81.5 v3.5" stroke="#777" stroke-width="0.6"/><circle cx="406.5" cy="67" r="1.3" fill="#3040c0"/><path d="M404 70 q3-2 4 2 l2 1" stroke="#3d5f9a" stroke-width="0.9" fill="none"/><circle cx="406" cy="80.3" r="1.1" fill="#d04040"/><path d="M403.5 86.5 l3.5-5.5 3.5 5.5 M405 84 h3" stroke="#3d5f9a" stroke-width="0.9" fill="none"/><path d="M443.5 73.5 h7 M447 65.5 v8 M446 66 l-2.5 6 h2.5z" stroke="#b8c0cc" stroke-width="0.7" fill="#d8dde5"/><path d="M443 87 v-6 l6 3 z M445 80 h5" stroke="#c0c8d2" stroke-width="0.7" fill="#dde2ea"/><path d="M506.5 67.2 a3.8 3.8 0 1 0 4 0.3" stroke="#b8c4d4" stroke-width="0.9" fill="none"/><rect x="504.3" y="79" width="8" height="8.5" fill="#e0a820" stroke="#4a4a4a" stroke-width="0.7"/><path d="M506 85 l4-4" stroke="#6a4a10" stroke-width="0.8"/><circle cx="560" cy="69.8" r="4.5" fill="#dbe8f5" stroke="#3d5f9a" stroke-width="0.9"/><path d="M560 67 l-1.8 2.2 h1.2 v2.5 h1.2 v-2.5 h1.2z" fill="#1f3f70"/><path d="M556.5 82 l5-2.8 3.5 4 -5 3z" fill="#ead9b8" stroke="#d8c8a0" stroke-width="0.6"/><path d="M557.5 79.5 l2 2 2.5-2.5" stroke="#b8c8d8" stroke-width="0.7" fill="none"/><path d="M618 67 l4-1.8 4 1.8 v5 l-4 1.8 -4-1.8z" fill="#7aa8e8" stroke="#2f6bc8" stroke-width="0.7"/><path d="M618 67 l4 1.8 4-1.8 M622 68.8 v5" stroke="#2f6bc8" stroke-width="0.6" fill="none"/><path d="M617.5 83.4 l4.3-2.6 4.3 2.6 -4.3 2.6z" fill="#d8f0d0" stroke="#2e9a40" stroke-width="1"/><path d="M653 73 l8-3.6" stroke="#2e9a40" stroke-width="1"/><circle cx="657.2" cy="83.6" r="1.2" fill="#2e9a40"/><rect x="691.3" y="66.5" width="6" height="4" fill="none" stroke="#c2c8d0" stroke-width="0.7"/><rect x="691.3" y="71" width="3.5" height="3.5" fill="none" stroke="#c8ced6" stroke-width="0.7"/><path d="M697.5 68 q1.2 1.5 0 3.5" stroke="#c2c8d0" stroke-width="0.6" fill="none"/><path d="M188.9 69.7 h3.2 l-1.6 1.7z" fill="#333"/><path d="M245.8 69.7 h3.2 l-1.6 1.7z" fill="#333"/><path d="M245.8 83.2 h3.2 l-1.6 1.7z" fill="#333"/><path d="M338.4 69.7 h3.2 l-1.6 1.7z" fill="#333"/><path d="M338.4 83.2 h3.2 l-1.6 1.7z" fill="#333"/><path d="M544.8 69.7 h3.2 l-1.6 1.7z" fill="#333"/><path d="M608.6 69.7 h3.2 l-1.6 1.7z" fill="#333"/></svg>
</body></html>
